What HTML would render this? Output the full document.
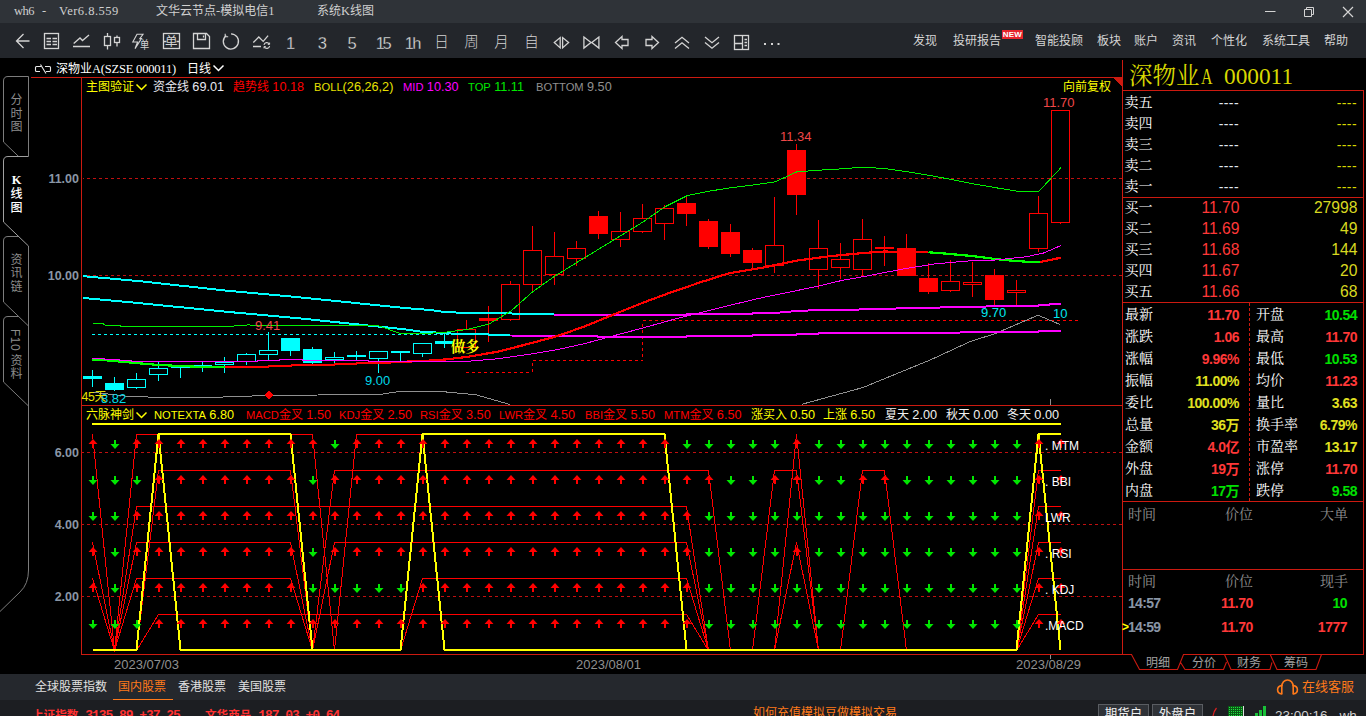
<!DOCTYPE html><html lang="zh"><head><meta charset="utf-8"><title>wh6</title><style>

html,body{margin:0;padding:0;background:#000;}
body{width:1366px;height:716px;overflow:hidden;position:relative;font-family:"Liberation Sans","Noto Sans CJK SC",sans-serif;}
.t{position:absolute;white-space:nowrap;}
.abs{position:absolute;}
svg{position:absolute;left:0;top:0;}

</style></head><body>
<div class="abs" style="left:0;top:0;width:1366px;height:23px;background:#2f3338"></div>
<div class="abs" style="left:0;top:23px;width:1366px;height:35px;background:#23262b"></div>
<div class="abs" style="left:0;top:674px;width:1366px;height:26px;background:#25282d"></div>
<div class="abs" style="left:0;top:700px;width:1366px;height:16px;background:#1c1e22"></div>
<svg width="1366" height="716" viewBox="0 0 1366 716">
<g shape-rendering="crispEdges">
<line x1="31" y1="77.5" x2="1122" y2="77.5" stroke="#cc1a10" stroke-width="1" />
<line x1="81.5" y1="77" x2="81.5" y2="655" stroke="#cc1a10" stroke-width="1" />
<line x1="82" y1="405.5" x2="1122" y2="405.5" stroke="#cc1a10" stroke-width="1" />
<line x1="81" y1="654.5" x2="1122" y2="654.5" stroke="#cc1a10" stroke-width="1" />
<line x1="1122.5" y1="60" x2="1122.5" y2="655" stroke="#cc1a10" stroke-width="1" />
<polygon points="1113,78 1122,78 1122,87" fill="#cc1a10"/>
<line x1="81" y1="452.5" x2="1122" y2="452.5" stroke="#c01010" stroke-width="1" stroke-dasharray="3 3"/>
<line x1="81" y1="524.5" x2="1122" y2="524.5" stroke="#c01010" stroke-width="1" stroke-dasharray="3 3"/>
<line x1="81" y1="596.5" x2="1122" y2="596.5" stroke="#c01010" stroke-width="1" stroke-dasharray="3 3"/>
<line x1="1050.5" y1="399" x2="1050.5" y2="405" stroke="#909090" stroke-width="1" />
<line x1="1050.5" y1="655" x2="1050.5" y2="659" stroke="#909090" stroke-width="1" />
</g>
<clipPath id="cm"><rect x="83" y="78" width="1039" height="327"/></clipPath>
<g clip-path="url(#cm)" shape-rendering="crispEdges">
<line x1="92" y1="334.5" x2="454" y2="334.5" stroke="#00ffff" stroke-width="1" stroke-dasharray="3 3"/>
<polyline points="466,372 532,372 532,360.5 642.5,360.5 642.5,320.5 1080,320.5" fill="none" stroke="#ff0000" stroke-width="1" stroke-dasharray="3 3"/>
<line x1="81" y1="178.5" x2="1122" y2="178.5" stroke="#c01010" stroke-width="1" stroke-dasharray="3 3"/>
<line x1="81" y1="275.5" x2="1122" y2="275.5" stroke="#c01010" stroke-width="1" stroke-dasharray="3 3"/>
<line x1="92.5" y1="370" x2="92.5" y2="387" stroke="#00ffff" stroke-width="1" />
<rect x="83" y="375.5" width="19" height="3.0" fill="#00ffff"/>
<line x1="114.5" y1="377" x2="114.5" y2="391" stroke="#00ffff" stroke-width="1" />
<rect x="105" y="383" width="19" height="7" fill="#00ffff"/>
<line x1="136.5" y1="373" x2="136.5" y2="379.5" stroke="#00ffff" stroke-width="1" />
<line x1="136.5" y1="387.5" x2="136.5" y2="389" stroke="#00ffff" stroke-width="1" />
<rect x="127.5" y="379.5" width="18" height="8.0" fill="none" stroke="#00ffff" stroke-width="1"/>
<line x1="158.5" y1="362" x2="158.5" y2="368" stroke="#00ffff" stroke-width="1" />
<line x1="158.5" y1="374.5" x2="158.5" y2="381" stroke="#00ffff" stroke-width="1" />
<rect x="149.5" y="368" width="18" height="6.5" fill="none" stroke="#00ffff" stroke-width="1"/>
<line x1="180.5" y1="364.5" x2="180.5" y2="378" stroke="#00ffff" stroke-width="1" />
<rect x="171" y="367" width="19" height="1" fill="#00ffff"/>
<line x1="202.5" y1="362" x2="202.5" y2="372" stroke="#00ffff" stroke-width="1" />
<rect x="193" y="365" width="19" height="1" fill="#00ffff"/>
<line x1="224.5" y1="357" x2="224.5" y2="362.5" stroke="#00ffff" stroke-width="1" />
<line x1="224.5" y1="364.5" x2="224.5" y2="373" stroke="#00ffff" stroke-width="1" />
<rect x="215.5" y="362.5" width="18" height="2.0" fill="none" stroke="#00ffff" stroke-width="1"/>
<line x1="246.5" y1="353" x2="246.5" y2="354.5" stroke="#00ffff" stroke-width="1" />
<line x1="246.5" y1="361" x2="246.5" y2="365" stroke="#00ffff" stroke-width="1" />
<rect x="237.5" y="354.5" width="18" height="6.5" fill="none" stroke="#00ffff" stroke-width="1"/>
<line x1="268.5" y1="332" x2="268.5" y2="350.5" stroke="#00ffff" stroke-width="1" />
<line x1="268.5" y1="354.5" x2="268.5" y2="360" stroke="#00ffff" stroke-width="1" />
<rect x="259.5" y="350.5" width="18" height="4.0" fill="none" stroke="#00ffff" stroke-width="1"/>
<line x1="290.5" y1="338" x2="290.5" y2="356" stroke="#00ffff" stroke-width="1" />
<rect x="281" y="338" width="19" height="13" fill="#00ffff"/>
<line x1="312.5" y1="347" x2="312.5" y2="364" stroke="#00ffff" stroke-width="1" />
<rect x="303" y="349" width="19" height="14" fill="#00ffff"/>
<line x1="334.5" y1="352" x2="334.5" y2="357.5" stroke="#00ffff" stroke-width="1" />
<line x1="334.5" y1="359.5" x2="334.5" y2="363" stroke="#00ffff" stroke-width="1" />
<rect x="325.5" y="357.5" width="18" height="2.0" fill="none" stroke="#00ffff" stroke-width="1"/>
<line x1="356.5" y1="350.5" x2="356.5" y2="360" stroke="#00ffff" stroke-width="1" />
<rect x="347" y="355" width="19" height="2" fill="#00ffff"/>
<line x1="378.5" y1="358" x2="378.5" y2="373" stroke="#00ffff" stroke-width="1" />
<rect x="369.5" y="351.5" width="18" height="6.5" fill="none" stroke="#00ffff" stroke-width="1"/>
<line x1="400.5" y1="350.5" x2="400.5" y2="361" stroke="#00ffff" stroke-width="1" />
<rect x="391" y="351" width="19" height="2" fill="#00ffff"/>
<line x1="422.5" y1="353.5" x2="422.5" y2="356.5" stroke="#00ffff" stroke-width="1" />
<rect x="413.5" y="343.5" width="18" height="10.0" fill="none" stroke="#00ffff" stroke-width="1"/>
<line x1="444.5" y1="334" x2="444.5" y2="348" stroke="#00ffff" stroke-width="1" />
<rect x="435" y="341" width="19" height="2.5" fill="#00ffff"/>
<line x1="466.5" y1="320" x2="466.5" y2="329.5" stroke="#ff0000" stroke-width="1" />
<rect x="457.5" y="329.5" width="18" height="18.0" fill="none" stroke="#ff0000" stroke-width="1"/>
<line x1="488.5" y1="306" x2="488.5" y2="341.5" stroke="#ff0000" stroke-width="1" />
<rect x="479" y="318" width="19" height="3" fill="#ff0000"/>
<line x1="510.5" y1="281" x2="510.5" y2="284.5" stroke="#ff0000" stroke-width="1" />
<line x1="510.5" y1="319" x2="510.5" y2="320.5" stroke="#ff0000" stroke-width="1" />
<rect x="501.5" y="284.5" width="18" height="34.5" fill="none" stroke="#ff0000" stroke-width="1"/>
<line x1="532.5" y1="226" x2="532.5" y2="250.5" stroke="#ff0000" stroke-width="1" />
<line x1="532.5" y1="284.5" x2="532.5" y2="292" stroke="#ff0000" stroke-width="1" />
<rect x="523.5" y="250.5" width="18" height="34.0" fill="none" stroke="#ff0000" stroke-width="1"/>
<line x1="554.5" y1="232" x2="554.5" y2="256.5" stroke="#ff0000" stroke-width="1" />
<line x1="554.5" y1="274.5" x2="554.5" y2="285" stroke="#ff0000" stroke-width="1" />
<rect x="545.5" y="256.5" width="18" height="18.0" fill="none" stroke="#ff0000" stroke-width="1"/>
<line x1="576.5" y1="241" x2="576.5" y2="248.5" stroke="#ff0000" stroke-width="1" />
<line x1="576.5" y1="258.5" x2="576.5" y2="266" stroke="#ff0000" stroke-width="1" />
<rect x="567.5" y="248.5" width="18" height="10.0" fill="none" stroke="#ff0000" stroke-width="1"/>
<line x1="598.5" y1="211" x2="598.5" y2="239" stroke="#ff0000" stroke-width="1" />
<rect x="589" y="216" width="19" height="18" fill="#ff0000"/>
<line x1="620.5" y1="212" x2="620.5" y2="231.5" stroke="#ff0000" stroke-width="1" />
<line x1="620.5" y1="239.5" x2="620.5" y2="247" stroke="#ff0000" stroke-width="1" />
<rect x="611.5" y="231.5" width="18" height="8.0" fill="none" stroke="#ff0000" stroke-width="1"/>
<line x1="642.5" y1="204" x2="642.5" y2="218.5" stroke="#ff0000" stroke-width="1" />
<line x1="642.5" y1="231.5" x2="642.5" y2="233" stroke="#ff0000" stroke-width="1" />
<rect x="633.5" y="218.5" width="18" height="13.0" fill="none" stroke="#ff0000" stroke-width="1"/>
<line x1="664.5" y1="205" x2="664.5" y2="208.5" stroke="#ff0000" stroke-width="1" />
<line x1="664.5" y1="223.5" x2="664.5" y2="240" stroke="#ff0000" stroke-width="1" />
<rect x="655.5" y="208.5" width="18" height="15.0" fill="none" stroke="#ff0000" stroke-width="1"/>
<line x1="686.5" y1="195" x2="686.5" y2="226" stroke="#ff0000" stroke-width="1" />
<rect x="677" y="203" width="19" height="11" fill="#ff0000"/>
<line x1="708.5" y1="219" x2="708.5" y2="249" stroke="#ff0000" stroke-width="1" />
<rect x="699" y="221" width="19" height="26" fill="#ff0000"/>
<line x1="730.5" y1="224" x2="730.5" y2="257" stroke="#ff0000" stroke-width="1" />
<rect x="721" y="232" width="19" height="22" fill="#ff0000"/>
<line x1="752.5" y1="248" x2="752.5" y2="269" stroke="#ff0000" stroke-width="1" />
<rect x="743" y="250" width="19" height="13" fill="#ff0000"/>
<line x1="774.5" y1="197" x2="774.5" y2="245.5" stroke="#ff0000" stroke-width="1" />
<line x1="774.5" y1="265.5" x2="774.5" y2="273" stroke="#ff0000" stroke-width="1" />
<rect x="765.5" y="245.5" width="18" height="20.0" fill="none" stroke="#ff0000" stroke-width="1"/>
<line x1="796.5" y1="144" x2="796.5" y2="214.5" stroke="#ff0000" stroke-width="1" />
<rect x="787" y="150" width="19" height="44.5" fill="#ff0000"/>
<line x1="818.5" y1="220" x2="818.5" y2="248.5" stroke="#ff0000" stroke-width="1" />
<line x1="818.5" y1="269.5" x2="818.5" y2="289" stroke="#ff0000" stroke-width="1" />
<rect x="809.5" y="248.5" width="18" height="21.0" fill="none" stroke="#ff0000" stroke-width="1"/>
<line x1="840.5" y1="243" x2="840.5" y2="259.5" stroke="#ff0000" stroke-width="1" />
<line x1="840.5" y1="267.5" x2="840.5" y2="279" stroke="#ff0000" stroke-width="1" />
<rect x="831.5" y="259.5" width="18" height="8.0" fill="none" stroke="#ff0000" stroke-width="1"/>
<line x1="862.5" y1="219" x2="862.5" y2="239.5" stroke="#ff0000" stroke-width="1" />
<line x1="862.5" y1="269.5" x2="862.5" y2="276" stroke="#ff0000" stroke-width="1" />
<rect x="853.5" y="239.5" width="18" height="30.0" fill="none" stroke="#ff0000" stroke-width="1"/>
<line x1="884.5" y1="236" x2="884.5" y2="266" stroke="#ff0000" stroke-width="1" />
<rect x="875" y="247" width="19" height="2" fill="#ff0000"/>
<line x1="906.5" y1="234" x2="906.5" y2="276" stroke="#ff0000" stroke-width="1" />
<rect x="897" y="248" width="19" height="28" fill="#ff0000"/>
<line x1="928.5" y1="263" x2="928.5" y2="294" stroke="#ff0000" stroke-width="1" />
<rect x="919" y="278" width="19" height="14" fill="#ff0000"/>
<line x1="950.5" y1="260" x2="950.5" y2="281.5" stroke="#ff0000" stroke-width="1" />
<line x1="950.5" y1="290.5" x2="950.5" y2="292" stroke="#ff0000" stroke-width="1" />
<rect x="941.5" y="281.5" width="18" height="9.0" fill="none" stroke="#ff0000" stroke-width="1"/>
<line x1="972.5" y1="261.5" x2="972.5" y2="282.5" stroke="#ff0000" stroke-width="1" />
<line x1="972.5" y1="284.5" x2="972.5" y2="297" stroke="#ff0000" stroke-width="1" />
<rect x="963.5" y="282.5" width="18" height="2.0" fill="none" stroke="#ff0000" stroke-width="1"/>
<line x1="994.5" y1="269" x2="994.5" y2="305" stroke="#ff0000" stroke-width="1" />
<rect x="985" y="275" width="19" height="25" fill="#ff0000"/>
<line x1="1016.5" y1="279.5" x2="1016.5" y2="290.5" stroke="#ff0000" stroke-width="1" />
<line x1="1016.5" y1="292.5" x2="1016.5" y2="305" stroke="#ff0000" stroke-width="1" />
<rect x="1007.5" y="290.5" width="18" height="2.0" fill="none" stroke="#ff0000" stroke-width="1"/>
<line x1="1038.5" y1="195.5" x2="1038.5" y2="213.5" stroke="#ff0000" stroke-width="1" />
<line x1="1038.5" y1="248.5" x2="1038.5" y2="252" stroke="#ff0000" stroke-width="1" />
<rect x="1029.5" y="213.5" width="18" height="35.0" fill="none" stroke="#ff0000" stroke-width="1"/>
<line x1="1060.5" y1="222.5" x2="1060.5" y2="223.5" stroke="#ff0000" stroke-width="1" />
<rect x="1051.5" y="110.5" width="18" height="112.0" fill="none" stroke="#ff0000" stroke-width="1"/>
</g>
<g clip-path="url(#cm)" shape-rendering="crispEdges">
<polyline points="92,392.3 111,394.3 126,396.1 148,397 156,397.5 215,397.3 258,395.8 269,395.4 380,394.5 400,391.3 438,391.2 476,394.8 510,404.5" fill="none" stroke="#909090" stroke-width="1" />
<polyline points="801.5,404.4 863,387.5 930.6,359.8 970.5,341.4 995,333.7 1038,315.2 1060,324.5" fill="none" stroke="#909090" stroke-width="1" />
<polyline points="81,276 138,281 230,291 296,297 405,308 430,310 445,312 467,313 520,313.6 554,314" fill="none" stroke="#00ffff" stroke-width="2" />
<polyline points="554,315 686,315 687,314 752,314 753,313 774,313 786,312 797,311 820,310 841,310 903,308.3 977,306.7 1010,306 1038,306 1039,305 1049,305 1050,304 1061,304" fill="none" stroke="#ff00ff" stroke-width="2" />
<polyline points="81,297.8 138,303 230,312.1 296,318 405,329.3 421,331.7 445,333 457,334 488,334 489,335 510,335" fill="none" stroke="#00ffff" stroke-width="2" />
<polyline points="510,335.5 560,336 597,336 598,337 686,337 687,336 752,336 753,335 796,335 797,334 818,334 819,333 881,333 977,332.4 1038,332 1039,331 1061,331" fill="none" stroke="#ff00ff" stroke-width="2" />
<polyline points="93,323.5 103,323.5 105,325 119,325 121,326.4 233,326.4 237,325.2 248,325 302,325.5 378,325.5 400,333.5 425,333.5 445,332.2 467,329.5 489,324 511,311 533,291.5 555,276 577,262.4 599,249 621,235.5 643,222 665,206.8 687,195.7 709,191.2 731,187.7 753,185 775,181.9 797,171.8 819,170.2 841,168.9 863,167.1 885,168.6 907,171.7 929,175.3 951,179.4 973,183.8 995,187.6 1017,191.2 1039,191.2 1061,167.6" fill="none" stroke="#00f000" stroke-width="1" />
<polyline points="92,360 103,360 114,361 125,362 136,363 147,364 159,365 181,366 203,367 225,367" fill="none" stroke="#00ff00" stroke-width="2.2" />
<polyline points="225,367 268,367 269,366 291,366 292,365 334,365 335,364 356,364 357,363 390,363 391,362 404,361.7 424,361 445,359.5 468,356.8 497,351.8 526,344.5 556,336.5 585,326.3 614,314.3 643.5,302.5 673,291.6 702,281.8 729,273.3 762,267.8 796,260.7 830,256.2 863,253 885,251.5 900,252 928.5,252.3" fill="none" stroke="#ff0000" stroke-width="2.2" />
<polyline points="928.5,252.3 939,253 950,254 961,255 972,256 979.5,257 987.7,258 994.7,259 1004.7,260 1016,261 1030,262 1040,262" fill="none" stroke="#00ff00" stroke-width="2.2" />
<polyline points="1040,262 1061,257.7" fill="none" stroke="#ff0000" stroke-width="2.2" />
<polyline points="92,358.5 104,358.5 105,359.5 119,359.5 120,360.5 131,360.5 132,361.5 244,361.5 257,361.5 258,360.5 279,360.5 280,359.5 302,359.5 303,360.5 368,360.5 369,361.5 404,361.5 455,362 468,361.3 497,358.8 526,354.8 556,349.9 585,343.5 614,335.7 643.5,327.8 673,319.6 702,312.2 731,305 762,297.7 780,294 819,286 841.5,280.5 863,276.7 903,269 934,264 970,260.8 995,260 1026,256.8 1044,252.9 1061,245.5" fill="none" stroke="#ff00ff" stroke-width="1" />
<polygon points="269,390.5 273.5,395 269,399.5 264.5,395" fill="#ff0000"/>
</g>
<g shape-rendering="crispEdges">
<line x1="92" y1="424" x2="1061" y2="424" stroke="#ffff00" stroke-width="2" />
</g><g shape-rendering="crispEdges">
<polyline points="92.5,650.5 114.5,650.5 136.5,650.5 158.5,614.5 180.5,614.5 202.5,614.5 224.5,614.5 246.5,614.5 268.5,614.5 290.5,614.5 312.5,614.5 334.5,614.5 356.5,614.5 378.5,614.5 400.5,614.5 422.5,614.5 444.5,614.5 466.5,614.5 488.5,614.5 510.5,614.5 532.5,614.5 554.5,614.5 576.5,614.5 598.5,614.5 620.5,614.5 642.5,614.5 664.5,614.5 686.5,614.5 708.5,650.5 730.5,650.5 752.5,650.5 774.5,650.5 796.5,650.5 818.5,650.5 840.5,650.5 862.5,650.5 884.5,650.5 906.5,650.5 928.5,650.5 950.5,650.5 972.5,650.5 994.5,650.5 1016.5,650.5 1038.5,614.5 1060.5,614.5" fill="none" stroke="#ff0000" stroke-width="1" />
<polyline points="92.5,578.5 114.5,650.5 136.5,578.5 158.5,578.5 180.5,578.5 202.5,578.5 224.5,578.5 246.5,578.5 268.5,578.5 290.5,578.5 312.5,650.5 334.5,650.5 356.5,650.5 378.5,650.5 400.5,650.5 422.5,578.5 444.5,578.5 466.5,578.5 488.5,578.5 510.5,578.5 532.5,578.5 554.5,578.5 576.5,578.5 598.5,578.5 620.5,578.5 642.5,578.5 664.5,578.5 686.5,578.5 708.5,650.5 730.5,650.5 752.5,650.5 774.5,650.5 796.5,650.5 818.5,650.5 840.5,650.5 862.5,650.5 884.5,650.5 906.5,650.5 928.5,650.5 950.5,650.5 972.5,650.5 994.5,650.5 1016.5,650.5 1038.5,578.5 1060.5,578.5" fill="none" stroke="#ff0000" stroke-width="1" />
<polyline points="92.5,542.5 114.5,650.5 136.5,542.5 158.5,542.5 180.5,542.5 202.5,542.5 224.5,542.5 246.5,542.5 268.5,542.5 290.5,542.5 312.5,650.5 334.5,542.5 356.5,542.5 378.5,542.5 400.5,542.5 422.5,542.5 444.5,542.5 466.5,542.5 488.5,542.5 510.5,542.5 532.5,542.5 554.5,542.5 576.5,542.5 598.5,542.5 620.5,542.5 642.5,542.5 664.5,542.5 686.5,542.5 708.5,650.5 730.5,650.5 752.5,650.5 774.5,650.5 796.5,542.5 818.5,650.5 840.5,650.5 862.5,650.5 884.5,650.5 906.5,650.5 928.5,650.5 950.5,650.5 972.5,650.5 994.5,650.5 1016.5,650.5 1038.5,542.5 1060.5,542.5" fill="none" stroke="#ff0000" stroke-width="1" />
<polyline points="92.5,650.5 114.5,650.5 136.5,506.5 158.5,506.5 180.5,506.5 202.5,506.5 224.5,506.5 246.5,506.5 268.5,506.5 290.5,506.5 312.5,506.5 334.5,506.5 356.5,506.5 378.5,506.5 400.5,506.5 422.5,506.5 444.5,506.5 466.5,506.5 488.5,506.5 510.5,506.5 532.5,506.5 554.5,506.5 576.5,506.5 598.5,506.5 620.5,506.5 642.5,506.5 664.5,506.5 686.5,506.5 708.5,650.5 730.5,650.5 752.5,650.5 774.5,650.5 796.5,650.5 818.5,650.5 840.5,650.5 862.5,650.5 884.5,650.5 906.5,650.5 928.5,650.5 950.5,650.5 972.5,650.5 994.5,650.5 1016.5,650.5 1038.5,506.5 1060.5,506.5" fill="none" stroke="#ff0000" stroke-width="1" />
<polyline points="92.5,650.5 114.5,650.5 136.5,650.5 158.5,470.5 180.5,470.5 202.5,470.5 224.5,470.5 246.5,470.5 268.5,470.5 290.5,470.5 312.5,650.5 334.5,470.5 356.5,470.5 378.5,470.5 400.5,470.5 422.5,470.5 444.5,470.5 466.5,470.5 488.5,470.5 510.5,470.5 532.5,470.5 554.5,470.5 576.5,470.5 598.5,470.5 620.5,470.5 642.5,470.5 664.5,470.5 686.5,470.5 708.5,470.5 730.5,650.5 752.5,650.5 774.5,470.5 796.5,470.5 818.5,650.5 840.5,650.5 862.5,470.5 884.5,470.5 906.5,650.5 928.5,650.5 950.5,650.5 972.5,650.5 994.5,650.5 1016.5,650.5 1038.5,470.5 1060.5,470.5" fill="none" stroke="#ff0000" stroke-width="1" />
<polyline points="92.5,434.5 114.5,650.5 136.5,434.5 158.5,434.5 180.5,434.5 202.5,434.5 224.5,434.5 246.5,434.5 268.5,434.5 290.5,434.5 312.5,434.5 334.5,650.5 356.5,434.5 378.5,434.5 400.5,434.5 422.5,434.5 444.5,434.5 466.5,434.5 488.5,434.5 510.5,434.5 532.5,434.5 554.5,434.5 576.5,434.5 598.5,434.5 620.5,434.5 642.5,434.5 664.5,434.5 686.5,650.5 708.5,650.5 730.5,650.5 752.5,650.5 774.5,650.5 796.5,434.5 818.5,650.5 840.5,650.5 862.5,650.5 884.5,650.5 906.5,650.5 928.5,650.5 950.5,650.5 972.5,650.5 994.5,650.5 1016.5,650.5 1038.5,434.5 1060.5,434.5" fill="none" stroke="#ff0000" stroke-width="1" />
<polyline points="92.5,650 114.5,650 136.5,650 158.5,434 180.5,650 202.5,650 224.5,650 246.5,650 268.5,650 290.5,650 312.5,650 334.5,650 356.5,650 378.5,650 400.5,650 422.5,434 444.5,650 466.5,650 488.5,650 510.5,650 532.5,650 554.5,650 576.5,650 598.5,650 620.5,650 642.5,650 664.5,650 686.5,650 708.5,650 730.5,650 752.5,650 774.5,650 796.5,650 818.5,650 840.5,650 862.5,650 884.5,650 906.5,650 928.5,650 950.5,650 972.5,650 994.5,650 1016.5,650 1038.5,434 1060.5,650" fill="none" stroke="#ffff00" stroke-width="2" />
<polyline points="92.5,650 114.5,650 136.5,650 158.5,434 180.5,434 202.5,434 224.5,434 246.5,434 268.5,434 290.5,434 312.5,650 334.5,650 356.5,650 378.5,650 400.5,650 422.5,434 444.5,434 466.5,434 488.5,434 510.5,434 532.5,434 554.5,434 576.5,434 598.5,434 620.5,434 642.5,434 664.5,434 686.5,650 708.5,650 730.5,650 752.5,650 774.5,650 796.5,650 818.5,650 840.5,650 862.5,650 884.5,650 906.5,650 928.5,650 950.5,650 972.5,650 994.5,650 1016.5,650 1038.5,434 1060.5,434" fill="none" stroke="#ffff00" stroke-width="2" />
</g><g>
<path d="M93,629.0 l4.5,-5 h-3.5 v-4 h-2 v4 h-3.5z" fill="#00e600"/>
<path d="M115,629.0 l4.5,-5 h-3.5 v-4 h-2 v4 h-3.5z" fill="#00e600"/>
<path d="M137,629.0 l4.5,-5 h-3.5 v-4 h-2 v4 h-3.5z" fill="#00e600"/>
<path d="M159,619.0 l4.5,5 h-3.5 v4 h-2 v-4 h-3.5z" fill="#ff0000"/>
<path d="M181,619.0 l4.5,5 h-3.5 v4 h-2 v-4 h-3.5z" fill="#ff0000"/>
<path d="M203,619.0 l4.5,5 h-3.5 v4 h-2 v-4 h-3.5z" fill="#ff0000"/>
<path d="M225,619.0 l4.5,5 h-3.5 v4 h-2 v-4 h-3.5z" fill="#ff0000"/>
<path d="M247,619.0 l4.5,5 h-3.5 v4 h-2 v-4 h-3.5z" fill="#ff0000"/>
<path d="M269,619.0 l4.5,5 h-3.5 v4 h-2 v-4 h-3.5z" fill="#ff0000"/>
<path d="M291,619.0 l4.5,5 h-3.5 v4 h-2 v-4 h-3.5z" fill="#ff0000"/>
<path d="M313,619.0 l4.5,5 h-3.5 v4 h-2 v-4 h-3.5z" fill="#ff0000"/>
<path d="M335,619.0 l4.5,5 h-3.5 v4 h-2 v-4 h-3.5z" fill="#ff0000"/>
<path d="M357,619.0 l4.5,5 h-3.5 v4 h-2 v-4 h-3.5z" fill="#ff0000"/>
<path d="M379,619.0 l4.5,5 h-3.5 v4 h-2 v-4 h-3.5z" fill="#ff0000"/>
<path d="M401,619.0 l4.5,5 h-3.5 v4 h-2 v-4 h-3.5z" fill="#ff0000"/>
<path d="M423,619.0 l4.5,5 h-3.5 v4 h-2 v-4 h-3.5z" fill="#ff0000"/>
<path d="M445,619.0 l4.5,5 h-3.5 v4 h-2 v-4 h-3.5z" fill="#ff0000"/>
<path d="M467,619.0 l4.5,5 h-3.5 v4 h-2 v-4 h-3.5z" fill="#ff0000"/>
<path d="M489,619.0 l4.5,5 h-3.5 v4 h-2 v-4 h-3.5z" fill="#ff0000"/>
<path d="M511,619.0 l4.5,5 h-3.5 v4 h-2 v-4 h-3.5z" fill="#ff0000"/>
<path d="M533,619.0 l4.5,5 h-3.5 v4 h-2 v-4 h-3.5z" fill="#ff0000"/>
<path d="M555,619.0 l4.5,5 h-3.5 v4 h-2 v-4 h-3.5z" fill="#ff0000"/>
<path d="M577,619.0 l4.5,5 h-3.5 v4 h-2 v-4 h-3.5z" fill="#ff0000"/>
<path d="M599,619.0 l4.5,5 h-3.5 v4 h-2 v-4 h-3.5z" fill="#ff0000"/>
<path d="M621,619.0 l4.5,5 h-3.5 v4 h-2 v-4 h-3.5z" fill="#ff0000"/>
<path d="M643,619.0 l4.5,5 h-3.5 v4 h-2 v-4 h-3.5z" fill="#ff0000"/>
<path d="M665,619.0 l4.5,5 h-3.5 v4 h-2 v-4 h-3.5z" fill="#ff0000"/>
<path d="M687,619.0 l4.5,5 h-3.5 v4 h-2 v-4 h-3.5z" fill="#ff0000"/>
<path d="M709,629.0 l4.5,-5 h-3.5 v-4 h-2 v4 h-3.5z" fill="#00e600"/>
<path d="M731,629.0 l4.5,-5 h-3.5 v-4 h-2 v4 h-3.5z" fill="#00e600"/>
<path d="M753,629.0 l4.5,-5 h-3.5 v-4 h-2 v4 h-3.5z" fill="#00e600"/>
<path d="M775,629.0 l4.5,-5 h-3.5 v-4 h-2 v4 h-3.5z" fill="#00e600"/>
<path d="M797,629.0 l4.5,-5 h-3.5 v-4 h-2 v4 h-3.5z" fill="#00e600"/>
<path d="M819,629.0 l4.5,-5 h-3.5 v-4 h-2 v4 h-3.5z" fill="#00e600"/>
<path d="M841,629.0 l4.5,-5 h-3.5 v-4 h-2 v4 h-3.5z" fill="#00e600"/>
<path d="M863,629.0 l4.5,-5 h-3.5 v-4 h-2 v4 h-3.5z" fill="#00e600"/>
<path d="M885,629.0 l4.5,-5 h-3.5 v-4 h-2 v4 h-3.5z" fill="#00e600"/>
<path d="M907,629.0 l4.5,-5 h-3.5 v-4 h-2 v4 h-3.5z" fill="#00e600"/>
<path d="M929,629.0 l4.5,-5 h-3.5 v-4 h-2 v4 h-3.5z" fill="#00e600"/>
<path d="M951,629.0 l4.5,-5 h-3.5 v-4 h-2 v4 h-3.5z" fill="#00e600"/>
<path d="M973,629.0 l4.5,-5 h-3.5 v-4 h-2 v4 h-3.5z" fill="#00e600"/>
<path d="M995,629.0 l4.5,-5 h-3.5 v-4 h-2 v4 h-3.5z" fill="#00e600"/>
<path d="M1017,629.0 l4.5,-5 h-3.5 v-4 h-2 v4 h-3.5z" fill="#00e600"/>
<path d="M1039,619.0 l4.5,5 h-3.5 v4 h-2 v-4 h-3.5z" fill="#ff0000"/>
<path d="M1061,619.0 l4.5,5 h-3.5 v4 h-2 v-4 h-3.5z" fill="#ff0000"/>
<path d="M93,583.0 l4.5,5 h-3.5 v4 h-2 v-4 h-3.5z" fill="#ff0000"/>
<path d="M115,593.0 l4.5,-5 h-3.5 v-4 h-2 v4 h-3.5z" fill="#00e600"/>
<path d="M137,583.0 l4.5,5 h-3.5 v4 h-2 v-4 h-3.5z" fill="#ff0000"/>
<path d="M159,583.0 l4.5,5 h-3.5 v4 h-2 v-4 h-3.5z" fill="#ff0000"/>
<path d="M181,583.0 l4.5,5 h-3.5 v4 h-2 v-4 h-3.5z" fill="#ff0000"/>
<path d="M203,583.0 l4.5,5 h-3.5 v4 h-2 v-4 h-3.5z" fill="#ff0000"/>
<path d="M225,583.0 l4.5,5 h-3.5 v4 h-2 v-4 h-3.5z" fill="#ff0000"/>
<path d="M247,583.0 l4.5,5 h-3.5 v4 h-2 v-4 h-3.5z" fill="#ff0000"/>
<path d="M269,583.0 l4.5,5 h-3.5 v4 h-2 v-4 h-3.5z" fill="#ff0000"/>
<path d="M291,583.0 l4.5,5 h-3.5 v4 h-2 v-4 h-3.5z" fill="#ff0000"/>
<path d="M313,593.0 l4.5,-5 h-3.5 v-4 h-2 v4 h-3.5z" fill="#00e600"/>
<path d="M335,593.0 l4.5,-5 h-3.5 v-4 h-2 v4 h-3.5z" fill="#00e600"/>
<path d="M357,593.0 l4.5,-5 h-3.5 v-4 h-2 v4 h-3.5z" fill="#00e600"/>
<path d="M379,593.0 l4.5,-5 h-3.5 v-4 h-2 v4 h-3.5z" fill="#00e600"/>
<path d="M401,593.0 l4.5,-5 h-3.5 v-4 h-2 v4 h-3.5z" fill="#00e600"/>
<path d="M423,583.0 l4.5,5 h-3.5 v4 h-2 v-4 h-3.5z" fill="#ff0000"/>
<path d="M445,583.0 l4.5,5 h-3.5 v4 h-2 v-4 h-3.5z" fill="#ff0000"/>
<path d="M467,583.0 l4.5,5 h-3.5 v4 h-2 v-4 h-3.5z" fill="#ff0000"/>
<path d="M489,583.0 l4.5,5 h-3.5 v4 h-2 v-4 h-3.5z" fill="#ff0000"/>
<path d="M511,583.0 l4.5,5 h-3.5 v4 h-2 v-4 h-3.5z" fill="#ff0000"/>
<path d="M533,583.0 l4.5,5 h-3.5 v4 h-2 v-4 h-3.5z" fill="#ff0000"/>
<path d="M555,583.0 l4.5,5 h-3.5 v4 h-2 v-4 h-3.5z" fill="#ff0000"/>
<path d="M577,583.0 l4.5,5 h-3.5 v4 h-2 v-4 h-3.5z" fill="#ff0000"/>
<path d="M599,583.0 l4.5,5 h-3.5 v4 h-2 v-4 h-3.5z" fill="#ff0000"/>
<path d="M621,583.0 l4.5,5 h-3.5 v4 h-2 v-4 h-3.5z" fill="#ff0000"/>
<path d="M643,583.0 l4.5,5 h-3.5 v4 h-2 v-4 h-3.5z" fill="#ff0000"/>
<path d="M665,583.0 l4.5,5 h-3.5 v4 h-2 v-4 h-3.5z" fill="#ff0000"/>
<path d="M687,583.0 l4.5,5 h-3.5 v4 h-2 v-4 h-3.5z" fill="#ff0000"/>
<path d="M709,593.0 l4.5,-5 h-3.5 v-4 h-2 v4 h-3.5z" fill="#00e600"/>
<path d="M731,593.0 l4.5,-5 h-3.5 v-4 h-2 v4 h-3.5z" fill="#00e600"/>
<path d="M753,593.0 l4.5,-5 h-3.5 v-4 h-2 v4 h-3.5z" fill="#00e600"/>
<path d="M775,593.0 l4.5,-5 h-3.5 v-4 h-2 v4 h-3.5z" fill="#00e600"/>
<path d="M797,593.0 l4.5,-5 h-3.5 v-4 h-2 v4 h-3.5z" fill="#00e600"/>
<path d="M819,593.0 l4.5,-5 h-3.5 v-4 h-2 v4 h-3.5z" fill="#00e600"/>
<path d="M841,593.0 l4.5,-5 h-3.5 v-4 h-2 v4 h-3.5z" fill="#00e600"/>
<path d="M863,593.0 l4.5,-5 h-3.5 v-4 h-2 v4 h-3.5z" fill="#00e600"/>
<path d="M885,593.0 l4.5,-5 h-3.5 v-4 h-2 v4 h-3.5z" fill="#00e600"/>
<path d="M907,593.0 l4.5,-5 h-3.5 v-4 h-2 v4 h-3.5z" fill="#00e600"/>
<path d="M929,593.0 l4.5,-5 h-3.5 v-4 h-2 v4 h-3.5z" fill="#00e600"/>
<path d="M951,593.0 l4.5,-5 h-3.5 v-4 h-2 v4 h-3.5z" fill="#00e600"/>
<path d="M973,593.0 l4.5,-5 h-3.5 v-4 h-2 v4 h-3.5z" fill="#00e600"/>
<path d="M995,593.0 l4.5,-5 h-3.5 v-4 h-2 v4 h-3.5z" fill="#00e600"/>
<path d="M1017,593.0 l4.5,-5 h-3.5 v-4 h-2 v4 h-3.5z" fill="#00e600"/>
<path d="M1039,583.0 l4.5,5 h-3.5 v4 h-2 v-4 h-3.5z" fill="#ff0000"/>
<path d="M1061,583.0 l4.5,5 h-3.5 v4 h-2 v-4 h-3.5z" fill="#ff0000"/>
<path d="M93,547.0 l4.5,5 h-3.5 v4 h-2 v-4 h-3.5z" fill="#ff0000"/>
<path d="M115,557.0 l4.5,-5 h-3.5 v-4 h-2 v4 h-3.5z" fill="#00e600"/>
<path d="M137,547.0 l4.5,5 h-3.5 v4 h-2 v-4 h-3.5z" fill="#ff0000"/>
<path d="M159,547.0 l4.5,5 h-3.5 v4 h-2 v-4 h-3.5z" fill="#ff0000"/>
<path d="M181,547.0 l4.5,5 h-3.5 v4 h-2 v-4 h-3.5z" fill="#ff0000"/>
<path d="M203,547.0 l4.5,5 h-3.5 v4 h-2 v-4 h-3.5z" fill="#ff0000"/>
<path d="M225,547.0 l4.5,5 h-3.5 v4 h-2 v-4 h-3.5z" fill="#ff0000"/>
<path d="M247,547.0 l4.5,5 h-3.5 v4 h-2 v-4 h-3.5z" fill="#ff0000"/>
<path d="M269,547.0 l4.5,5 h-3.5 v4 h-2 v-4 h-3.5z" fill="#ff0000"/>
<path d="M291,547.0 l4.5,5 h-3.5 v4 h-2 v-4 h-3.5z" fill="#ff0000"/>
<path d="M313,557.0 l4.5,-5 h-3.5 v-4 h-2 v4 h-3.5z" fill="#00e600"/>
<path d="M335,547.0 l4.5,5 h-3.5 v4 h-2 v-4 h-3.5z" fill="#ff0000"/>
<path d="M357,547.0 l4.5,5 h-3.5 v4 h-2 v-4 h-3.5z" fill="#ff0000"/>
<path d="M379,547.0 l4.5,5 h-3.5 v4 h-2 v-4 h-3.5z" fill="#ff0000"/>
<path d="M401,547.0 l4.5,5 h-3.5 v4 h-2 v-4 h-3.5z" fill="#ff0000"/>
<path d="M423,547.0 l4.5,5 h-3.5 v4 h-2 v-4 h-3.5z" fill="#ff0000"/>
<path d="M445,547.0 l4.5,5 h-3.5 v4 h-2 v-4 h-3.5z" fill="#ff0000"/>
<path d="M467,547.0 l4.5,5 h-3.5 v4 h-2 v-4 h-3.5z" fill="#ff0000"/>
<path d="M489,547.0 l4.5,5 h-3.5 v4 h-2 v-4 h-3.5z" fill="#ff0000"/>
<path d="M511,547.0 l4.5,5 h-3.5 v4 h-2 v-4 h-3.5z" fill="#ff0000"/>
<path d="M533,547.0 l4.5,5 h-3.5 v4 h-2 v-4 h-3.5z" fill="#ff0000"/>
<path d="M555,547.0 l4.5,5 h-3.5 v4 h-2 v-4 h-3.5z" fill="#ff0000"/>
<path d="M577,547.0 l4.5,5 h-3.5 v4 h-2 v-4 h-3.5z" fill="#ff0000"/>
<path d="M599,547.0 l4.5,5 h-3.5 v4 h-2 v-4 h-3.5z" fill="#ff0000"/>
<path d="M621,547.0 l4.5,5 h-3.5 v4 h-2 v-4 h-3.5z" fill="#ff0000"/>
<path d="M643,547.0 l4.5,5 h-3.5 v4 h-2 v-4 h-3.5z" fill="#ff0000"/>
<path d="M665,547.0 l4.5,5 h-3.5 v4 h-2 v-4 h-3.5z" fill="#ff0000"/>
<path d="M687,547.0 l4.5,5 h-3.5 v4 h-2 v-4 h-3.5z" fill="#ff0000"/>
<path d="M709,557.0 l4.5,-5 h-3.5 v-4 h-2 v4 h-3.5z" fill="#00e600"/>
<path d="M731,557.0 l4.5,-5 h-3.5 v-4 h-2 v4 h-3.5z" fill="#00e600"/>
<path d="M753,557.0 l4.5,-5 h-3.5 v-4 h-2 v4 h-3.5z" fill="#00e600"/>
<path d="M775,557.0 l4.5,-5 h-3.5 v-4 h-2 v4 h-3.5z" fill="#00e600"/>
<path d="M797,547.0 l4.5,5 h-3.5 v4 h-2 v-4 h-3.5z" fill="#ff0000"/>
<path d="M819,557.0 l4.5,-5 h-3.5 v-4 h-2 v4 h-3.5z" fill="#00e600"/>
<path d="M841,557.0 l4.5,-5 h-3.5 v-4 h-2 v4 h-3.5z" fill="#00e600"/>
<path d="M863,557.0 l4.5,-5 h-3.5 v-4 h-2 v4 h-3.5z" fill="#00e600"/>
<path d="M885,557.0 l4.5,-5 h-3.5 v-4 h-2 v4 h-3.5z" fill="#00e600"/>
<path d="M907,557.0 l4.5,-5 h-3.5 v-4 h-2 v4 h-3.5z" fill="#00e600"/>
<path d="M929,557.0 l4.5,-5 h-3.5 v-4 h-2 v4 h-3.5z" fill="#00e600"/>
<path d="M951,557.0 l4.5,-5 h-3.5 v-4 h-2 v4 h-3.5z" fill="#00e600"/>
<path d="M973,557.0 l4.5,-5 h-3.5 v-4 h-2 v4 h-3.5z" fill="#00e600"/>
<path d="M995,557.0 l4.5,-5 h-3.5 v-4 h-2 v4 h-3.5z" fill="#00e600"/>
<path d="M1017,557.0 l4.5,-5 h-3.5 v-4 h-2 v4 h-3.5z" fill="#00e600"/>
<path d="M1039,547.0 l4.5,5 h-3.5 v4 h-2 v-4 h-3.5z" fill="#ff0000"/>
<path d="M1061,547.0 l4.5,5 h-3.5 v4 h-2 v-4 h-3.5z" fill="#ff0000"/>
<path d="M93,521.0 l4.5,-5 h-3.5 v-4 h-2 v4 h-3.5z" fill="#00e600"/>
<path d="M115,521.0 l4.5,-5 h-3.5 v-4 h-2 v4 h-3.5z" fill="#00e600"/>
<path d="M137,511.0 l4.5,5 h-3.5 v4 h-2 v-4 h-3.5z" fill="#ff0000"/>
<path d="M159,511.0 l4.5,5 h-3.5 v4 h-2 v-4 h-3.5z" fill="#ff0000"/>
<path d="M181,511.0 l4.5,5 h-3.5 v4 h-2 v-4 h-3.5z" fill="#ff0000"/>
<path d="M203,511.0 l4.5,5 h-3.5 v4 h-2 v-4 h-3.5z" fill="#ff0000"/>
<path d="M225,511.0 l4.5,5 h-3.5 v4 h-2 v-4 h-3.5z" fill="#ff0000"/>
<path d="M247,511.0 l4.5,5 h-3.5 v4 h-2 v-4 h-3.5z" fill="#ff0000"/>
<path d="M269,511.0 l4.5,5 h-3.5 v4 h-2 v-4 h-3.5z" fill="#ff0000"/>
<path d="M291,511.0 l4.5,5 h-3.5 v4 h-2 v-4 h-3.5z" fill="#ff0000"/>
<path d="M313,511.0 l4.5,5 h-3.5 v4 h-2 v-4 h-3.5z" fill="#ff0000"/>
<path d="M335,511.0 l4.5,5 h-3.5 v4 h-2 v-4 h-3.5z" fill="#ff0000"/>
<path d="M357,511.0 l4.5,5 h-3.5 v4 h-2 v-4 h-3.5z" fill="#ff0000"/>
<path d="M379,511.0 l4.5,5 h-3.5 v4 h-2 v-4 h-3.5z" fill="#ff0000"/>
<path d="M401,511.0 l4.5,5 h-3.5 v4 h-2 v-4 h-3.5z" fill="#ff0000"/>
<path d="M423,511.0 l4.5,5 h-3.5 v4 h-2 v-4 h-3.5z" fill="#ff0000"/>
<path d="M445,511.0 l4.5,5 h-3.5 v4 h-2 v-4 h-3.5z" fill="#ff0000"/>
<path d="M467,511.0 l4.5,5 h-3.5 v4 h-2 v-4 h-3.5z" fill="#ff0000"/>
<path d="M489,511.0 l4.5,5 h-3.5 v4 h-2 v-4 h-3.5z" fill="#ff0000"/>
<path d="M511,511.0 l4.5,5 h-3.5 v4 h-2 v-4 h-3.5z" fill="#ff0000"/>
<path d="M533,511.0 l4.5,5 h-3.5 v4 h-2 v-4 h-3.5z" fill="#ff0000"/>
<path d="M555,511.0 l4.5,5 h-3.5 v4 h-2 v-4 h-3.5z" fill="#ff0000"/>
<path d="M577,511.0 l4.5,5 h-3.5 v4 h-2 v-4 h-3.5z" fill="#ff0000"/>
<path d="M599,511.0 l4.5,5 h-3.5 v4 h-2 v-4 h-3.5z" fill="#ff0000"/>
<path d="M621,511.0 l4.5,5 h-3.5 v4 h-2 v-4 h-3.5z" fill="#ff0000"/>
<path d="M643,511.0 l4.5,5 h-3.5 v4 h-2 v-4 h-3.5z" fill="#ff0000"/>
<path d="M665,511.0 l4.5,5 h-3.5 v4 h-2 v-4 h-3.5z" fill="#ff0000"/>
<path d="M687,511.0 l4.5,5 h-3.5 v4 h-2 v-4 h-3.5z" fill="#ff0000"/>
<path d="M709,521.0 l4.5,-5 h-3.5 v-4 h-2 v4 h-3.5z" fill="#00e600"/>
<path d="M731,521.0 l4.5,-5 h-3.5 v-4 h-2 v4 h-3.5z" fill="#00e600"/>
<path d="M753,521.0 l4.5,-5 h-3.5 v-4 h-2 v4 h-3.5z" fill="#00e600"/>
<path d="M775,521.0 l4.5,-5 h-3.5 v-4 h-2 v4 h-3.5z" fill="#00e600"/>
<path d="M797,521.0 l4.5,-5 h-3.5 v-4 h-2 v4 h-3.5z" fill="#00e600"/>
<path d="M819,521.0 l4.5,-5 h-3.5 v-4 h-2 v4 h-3.5z" fill="#00e600"/>
<path d="M841,521.0 l4.5,-5 h-3.5 v-4 h-2 v4 h-3.5z" fill="#00e600"/>
<path d="M863,521.0 l4.5,-5 h-3.5 v-4 h-2 v4 h-3.5z" fill="#00e600"/>
<path d="M885,521.0 l4.5,-5 h-3.5 v-4 h-2 v4 h-3.5z" fill="#00e600"/>
<path d="M907,521.0 l4.5,-5 h-3.5 v-4 h-2 v4 h-3.5z" fill="#00e600"/>
<path d="M929,521.0 l4.5,-5 h-3.5 v-4 h-2 v4 h-3.5z" fill="#00e600"/>
<path d="M951,521.0 l4.5,-5 h-3.5 v-4 h-2 v4 h-3.5z" fill="#00e600"/>
<path d="M973,521.0 l4.5,-5 h-3.5 v-4 h-2 v4 h-3.5z" fill="#00e600"/>
<path d="M995,521.0 l4.5,-5 h-3.5 v-4 h-2 v4 h-3.5z" fill="#00e600"/>
<path d="M1017,521.0 l4.5,-5 h-3.5 v-4 h-2 v4 h-3.5z" fill="#00e600"/>
<path d="M1039,511.0 l4.5,5 h-3.5 v4 h-2 v-4 h-3.5z" fill="#ff0000"/>
<path d="M1061,511.0 l4.5,5 h-3.5 v4 h-2 v-4 h-3.5z" fill="#ff0000"/>
<path d="M93,485.0 l4.5,-5 h-3.5 v-4 h-2 v4 h-3.5z" fill="#00e600"/>
<path d="M115,485.0 l4.5,-5 h-3.5 v-4 h-2 v4 h-3.5z" fill="#00e600"/>
<path d="M137,485.0 l4.5,-5 h-3.5 v-4 h-2 v4 h-3.5z" fill="#00e600"/>
<path d="M159,475.0 l4.5,5 h-3.5 v4 h-2 v-4 h-3.5z" fill="#ff0000"/>
<path d="M181,475.0 l4.5,5 h-3.5 v4 h-2 v-4 h-3.5z" fill="#ff0000"/>
<path d="M203,475.0 l4.5,5 h-3.5 v4 h-2 v-4 h-3.5z" fill="#ff0000"/>
<path d="M225,475.0 l4.5,5 h-3.5 v4 h-2 v-4 h-3.5z" fill="#ff0000"/>
<path d="M247,475.0 l4.5,5 h-3.5 v4 h-2 v-4 h-3.5z" fill="#ff0000"/>
<path d="M269,475.0 l4.5,5 h-3.5 v4 h-2 v-4 h-3.5z" fill="#ff0000"/>
<path d="M291,475.0 l4.5,5 h-3.5 v4 h-2 v-4 h-3.5z" fill="#ff0000"/>
<path d="M313,485.0 l4.5,-5 h-3.5 v-4 h-2 v4 h-3.5z" fill="#00e600"/>
<path d="M335,475.0 l4.5,5 h-3.5 v4 h-2 v-4 h-3.5z" fill="#ff0000"/>
<path d="M357,475.0 l4.5,5 h-3.5 v4 h-2 v-4 h-3.5z" fill="#ff0000"/>
<path d="M379,475.0 l4.5,5 h-3.5 v4 h-2 v-4 h-3.5z" fill="#ff0000"/>
<path d="M401,475.0 l4.5,5 h-3.5 v4 h-2 v-4 h-3.5z" fill="#ff0000"/>
<path d="M423,475.0 l4.5,5 h-3.5 v4 h-2 v-4 h-3.5z" fill="#ff0000"/>
<path d="M445,475.0 l4.5,5 h-3.5 v4 h-2 v-4 h-3.5z" fill="#ff0000"/>
<path d="M467,475.0 l4.5,5 h-3.5 v4 h-2 v-4 h-3.5z" fill="#ff0000"/>
<path d="M489,475.0 l4.5,5 h-3.5 v4 h-2 v-4 h-3.5z" fill="#ff0000"/>
<path d="M511,475.0 l4.5,5 h-3.5 v4 h-2 v-4 h-3.5z" fill="#ff0000"/>
<path d="M533,475.0 l4.5,5 h-3.5 v4 h-2 v-4 h-3.5z" fill="#ff0000"/>
<path d="M555,475.0 l4.5,5 h-3.5 v4 h-2 v-4 h-3.5z" fill="#ff0000"/>
<path d="M577,475.0 l4.5,5 h-3.5 v4 h-2 v-4 h-3.5z" fill="#ff0000"/>
<path d="M599,475.0 l4.5,5 h-3.5 v4 h-2 v-4 h-3.5z" fill="#ff0000"/>
<path d="M621,475.0 l4.5,5 h-3.5 v4 h-2 v-4 h-3.5z" fill="#ff0000"/>
<path d="M643,475.0 l4.5,5 h-3.5 v4 h-2 v-4 h-3.5z" fill="#ff0000"/>
<path d="M665,475.0 l4.5,5 h-3.5 v4 h-2 v-4 h-3.5z" fill="#ff0000"/>
<path d="M687,475.0 l4.5,5 h-3.5 v4 h-2 v-4 h-3.5z" fill="#ff0000"/>
<path d="M709,475.0 l4.5,5 h-3.5 v4 h-2 v-4 h-3.5z" fill="#ff0000"/>
<path d="M731,485.0 l4.5,-5 h-3.5 v-4 h-2 v4 h-3.5z" fill="#00e600"/>
<path d="M753,485.0 l4.5,-5 h-3.5 v-4 h-2 v4 h-3.5z" fill="#00e600"/>
<path d="M775,475.0 l4.5,5 h-3.5 v4 h-2 v-4 h-3.5z" fill="#ff0000"/>
<path d="M797,475.0 l4.5,5 h-3.5 v4 h-2 v-4 h-3.5z" fill="#ff0000"/>
<path d="M819,485.0 l4.5,-5 h-3.5 v-4 h-2 v4 h-3.5z" fill="#00e600"/>
<path d="M841,485.0 l4.5,-5 h-3.5 v-4 h-2 v4 h-3.5z" fill="#00e600"/>
<path d="M863,475.0 l4.5,5 h-3.5 v4 h-2 v-4 h-3.5z" fill="#ff0000"/>
<path d="M885,475.0 l4.5,5 h-3.5 v4 h-2 v-4 h-3.5z" fill="#ff0000"/>
<path d="M907,485.0 l4.5,-5 h-3.5 v-4 h-2 v4 h-3.5z" fill="#00e600"/>
<path d="M929,485.0 l4.5,-5 h-3.5 v-4 h-2 v4 h-3.5z" fill="#00e600"/>
<path d="M951,485.0 l4.5,-5 h-3.5 v-4 h-2 v4 h-3.5z" fill="#00e600"/>
<path d="M973,485.0 l4.5,-5 h-3.5 v-4 h-2 v4 h-3.5z" fill="#00e600"/>
<path d="M995,485.0 l4.5,-5 h-3.5 v-4 h-2 v4 h-3.5z" fill="#00e600"/>
<path d="M1017,485.0 l4.5,-5 h-3.5 v-4 h-2 v4 h-3.5z" fill="#00e600"/>
<path d="M1039,475.0 l4.5,5 h-3.5 v4 h-2 v-4 h-3.5z" fill="#ff0000"/>
<path d="M1061,475.0 l4.5,5 h-3.5 v4 h-2 v-4 h-3.5z" fill="#ff0000"/>
<path d="M93,439.0 l4.5,5 h-3.5 v4 h-2 v-4 h-3.5z" fill="#ff0000"/>
<path d="M115,449.0 l4.5,-5 h-3.5 v-4 h-2 v4 h-3.5z" fill="#00e600"/>
<path d="M137,439.0 l4.5,5 h-3.5 v4 h-2 v-4 h-3.5z" fill="#ff0000"/>
<path d="M159,439.0 l4.5,5 h-3.5 v4 h-2 v-4 h-3.5z" fill="#ff0000"/>
<path d="M181,439.0 l4.5,5 h-3.5 v4 h-2 v-4 h-3.5z" fill="#ff0000"/>
<path d="M203,439.0 l4.5,5 h-3.5 v4 h-2 v-4 h-3.5z" fill="#ff0000"/>
<path d="M225,439.0 l4.5,5 h-3.5 v4 h-2 v-4 h-3.5z" fill="#ff0000"/>
<path d="M247,439.0 l4.5,5 h-3.5 v4 h-2 v-4 h-3.5z" fill="#ff0000"/>
<path d="M269,439.0 l4.5,5 h-3.5 v4 h-2 v-4 h-3.5z" fill="#ff0000"/>
<path d="M291,439.0 l4.5,5 h-3.5 v4 h-2 v-4 h-3.5z" fill="#ff0000"/>
<path d="M313,439.0 l4.5,5 h-3.5 v4 h-2 v-4 h-3.5z" fill="#ff0000"/>
<path d="M335,449.0 l4.5,-5 h-3.5 v-4 h-2 v4 h-3.5z" fill="#00e600"/>
<path d="M357,439.0 l4.5,5 h-3.5 v4 h-2 v-4 h-3.5z" fill="#ff0000"/>
<path d="M379,439.0 l4.5,5 h-3.5 v4 h-2 v-4 h-3.5z" fill="#ff0000"/>
<path d="M401,439.0 l4.5,5 h-3.5 v4 h-2 v-4 h-3.5z" fill="#ff0000"/>
<path d="M423,439.0 l4.5,5 h-3.5 v4 h-2 v-4 h-3.5z" fill="#ff0000"/>
<path d="M445,439.0 l4.5,5 h-3.5 v4 h-2 v-4 h-3.5z" fill="#ff0000"/>
<path d="M467,439.0 l4.5,5 h-3.5 v4 h-2 v-4 h-3.5z" fill="#ff0000"/>
<path d="M489,439.0 l4.5,5 h-3.5 v4 h-2 v-4 h-3.5z" fill="#ff0000"/>
<path d="M511,439.0 l4.5,5 h-3.5 v4 h-2 v-4 h-3.5z" fill="#ff0000"/>
<path d="M533,439.0 l4.5,5 h-3.5 v4 h-2 v-4 h-3.5z" fill="#ff0000"/>
<path d="M555,439.0 l4.5,5 h-3.5 v4 h-2 v-4 h-3.5z" fill="#ff0000"/>
<path d="M577,439.0 l4.5,5 h-3.5 v4 h-2 v-4 h-3.5z" fill="#ff0000"/>
<path d="M599,439.0 l4.5,5 h-3.5 v4 h-2 v-4 h-3.5z" fill="#ff0000"/>
<path d="M621,439.0 l4.5,5 h-3.5 v4 h-2 v-4 h-3.5z" fill="#ff0000"/>
<path d="M643,439.0 l4.5,5 h-3.5 v4 h-2 v-4 h-3.5z" fill="#ff0000"/>
<path d="M665,439.0 l4.5,5 h-3.5 v4 h-2 v-4 h-3.5z" fill="#ff0000"/>
<path d="M687,449.0 l4.5,-5 h-3.5 v-4 h-2 v4 h-3.5z" fill="#00e600"/>
<path d="M709,449.0 l4.5,-5 h-3.5 v-4 h-2 v4 h-3.5z" fill="#00e600"/>
<path d="M731,449.0 l4.5,-5 h-3.5 v-4 h-2 v4 h-3.5z" fill="#00e600"/>
<path d="M753,449.0 l4.5,-5 h-3.5 v-4 h-2 v4 h-3.5z" fill="#00e600"/>
<path d="M775,449.0 l4.5,-5 h-3.5 v-4 h-2 v4 h-3.5z" fill="#00e600"/>
<path d="M797,439.0 l4.5,5 h-3.5 v4 h-2 v-4 h-3.5z" fill="#ff0000"/>
<path d="M819,449.0 l4.5,-5 h-3.5 v-4 h-2 v4 h-3.5z" fill="#00e600"/>
<path d="M841,449.0 l4.5,-5 h-3.5 v-4 h-2 v4 h-3.5z" fill="#00e600"/>
<path d="M863,449.0 l4.5,-5 h-3.5 v-4 h-2 v4 h-3.5z" fill="#00e600"/>
<path d="M885,449.0 l4.5,-5 h-3.5 v-4 h-2 v4 h-3.5z" fill="#00e600"/>
<path d="M907,449.0 l4.5,-5 h-3.5 v-4 h-2 v4 h-3.5z" fill="#00e600"/>
<path d="M929,449.0 l4.5,-5 h-3.5 v-4 h-2 v4 h-3.5z" fill="#00e600"/>
<path d="M951,449.0 l4.5,-5 h-3.5 v-4 h-2 v4 h-3.5z" fill="#00e600"/>
<path d="M973,449.0 l4.5,-5 h-3.5 v-4 h-2 v4 h-3.5z" fill="#00e600"/>
<path d="M995,449.0 l4.5,-5 h-3.5 v-4 h-2 v4 h-3.5z" fill="#00e600"/>
<path d="M1017,449.0 l4.5,-5 h-3.5 v-4 h-2 v4 h-3.5z" fill="#00e600"/>
<path d="M1039,439.0 l4.5,5 h-3.5 v4 h-2 v-4 h-3.5z" fill="#ff0000"/>
<path d="M1061,439.0 l4.5,5 h-3.5 v4 h-2 v-4 h-3.5z" fill="#ff0000"/>
</g>
</svg>
<div class="t" style="left:14px;top:3px;font:normal 12px/16px 'Liberation Sans','Noto Sans CJK SC',sans-serif;color:#d0d0d0;"><span style="font:12.5px/16px 'Liberation Serif',serif;letter-spacing:-0.5px">wh6</span></div>
<div class="t" style="left:42px;top:3px;font:normal 12px/16px 'Liberation Sans','Noto Sans CJK SC',sans-serif;color:#d0d0d0;"><span style="font:12.5px/16px 'Liberation Serif',serif;letter-spacing:0px">-</span></div>
<div class="t" style="left:59px;top:3px;font:normal 12px/16px 'Liberation Sans','Noto Sans CJK SC',sans-serif;color:#d0d0d0;"><span style="font:12.5px/16px 'Liberation Serif',serif;letter-spacing:0.5px">Ver6.8.559</span></div>
<div class="t" style="left:156px;top:3px;font:normal 12px/16px 'Liberation Sans','Noto Sans CJK SC',sans-serif;color:#d0d0d0;">文华云节点<span style="font:12.5px/16px 'Liberation Serif',serif;letter-spacing:0px">-</span>模拟电信<span style="font:12.5px/16px 'Liberation Serif',serif;letter-spacing:0px">1</span></div>
<div class="t" style="left:317px;top:3px;font:normal 12px/16px 'Liberation Sans','Noto Sans CJK SC',sans-serif;color:#d0d0d0;">系统<span style="font:12.5px/16px 'Liberation Serif',serif;letter-spacing:0px">K</span>线图</div>
<div class="t" style="left:913px;top:33px;font:normal 12px/16px 'Liberation Sans','Noto Sans CJK SC',sans-serif;color:#d4d4d4;">发现</div>
<div class="t" style="left:953px;top:33px;font:normal 12px/16px 'Liberation Sans','Noto Sans CJK SC',sans-serif;color:#d4d4d4;">投研报告</div>
<div class="t" style="left:1035px;top:33px;font:normal 12px/16px 'Liberation Sans','Noto Sans CJK SC',sans-serif;color:#d4d4d4;">智能投顾</div>
<div class="t" style="left:1097px;top:33px;font:normal 12px/16px 'Liberation Sans','Noto Sans CJK SC',sans-serif;color:#d4d4d4;">板块</div>
<div class="t" style="left:1134px;top:33px;font:normal 12px/16px 'Liberation Sans','Noto Sans CJK SC',sans-serif;color:#d4d4d4;">账户</div>
<div class="t" style="left:1172px;top:33px;font:normal 12px/16px 'Liberation Sans','Noto Sans CJK SC',sans-serif;color:#d4d4d4;">资讯</div>
<div class="t" style="left:1211px;top:33px;font:normal 12px/16px 'Liberation Sans','Noto Sans CJK SC',sans-serif;color:#d4d4d4;">个性化</div>
<div class="t" style="left:1262px;top:33px;font:normal 12px/16px 'Liberation Sans','Noto Sans CJK SC',sans-serif;color:#d4d4d4;">系统工具</div>
<div class="t" style="left:1324px;top:33px;font:normal 12px/16px 'Liberation Sans','Noto Sans CJK SC',sans-serif;color:#d4d4d4;">帮助</div>
<div class="t" style="left:1002px;top:30px;width:21px;height:9px;background:#e8252c;color:#fff;font:bold 8px/9px 'Liberation Sans',sans-serif;text-align:center;letter-spacing:0.2px">NEW</div>
<div class="t" style="left:270.5px;top:33px;width:40px;text-align:center;font:16.5px/20px 'Liberation Sans','Noto Sans CJK SC',sans-serif;color:#e2e2e2;letter-spacing:0px;-webkit-text-stroke:0.3px #23262b;padding-left:0px;box-sizing:border-box">1</div>
<div class="t" style="left:302.3px;top:33px;width:40px;text-align:center;font:16.5px/20px 'Liberation Sans','Noto Sans CJK SC',sans-serif;color:#e2e2e2;letter-spacing:0px;-webkit-text-stroke:0.3px #23262b;padding-left:0px;box-sizing:border-box">3</div>
<div class="t" style="left:332.2px;top:33px;width:40px;text-align:center;font:16.5px/20px 'Liberation Sans','Noto Sans CJK SC',sans-serif;color:#e2e2e2;letter-spacing:0px;-webkit-text-stroke:0.3px #23262b;padding-left:0px;box-sizing:border-box">5</div>
<div class="t" style="left:361.3px;top:33px;width:40px;text-align:center;font:16.5px/20px 'Liberation Sans','Noto Sans CJK SC',sans-serif;color:#e2e2e2;letter-spacing:-2.4px;-webkit-text-stroke:0.3px #23262b;padding-left:2.4px;box-sizing:border-box">15</div>
<div class="t" style="left:391.3px;top:33px;width:40px;text-align:center;font:16.5px/20px 'Liberation Sans','Noto Sans CJK SC',sans-serif;color:#e2e2e2;letter-spacing:-1.8px;-webkit-text-stroke:0.3px #23262b;padding-left:1.8px;box-sizing:border-box">1h</div>
<div class="t" style="left:426.5px;top:32px;width:30px;text-align:center;font:300 14.5px/20px 'Liberation Sans','Noto Sans CJK SC',sans-serif;color:#d4d4d4">日</div>
<div class="t" style="left:456.5px;top:32px;width:30px;text-align:center;font:300 14.5px/20px 'Liberation Sans','Noto Sans CJK SC',sans-serif;color:#d4d4d4">周</div>
<div class="t" style="left:486.5px;top:32px;width:30px;text-align:center;font:300 14.5px/20px 'Liberation Sans','Noto Sans CJK SC',sans-serif;color:#d4d4d4">月</div>
<div class="t" style="left:516.5px;top:32px;width:30px;text-align:center;font:300 14.5px/20px 'Liberation Sans','Noto Sans CJK SC',sans-serif;color:#d4d4d4">自</div>
<div class="t" style="left:56px;top:61px;font:normal 12px/16px 'Liberation Sans','Noto Sans CJK SC',sans-serif;color:#fff;">深物业<span style="font:12.5px/16px 'Liberation Serif',serif;letter-spacing:-0.2px">A(SZSE&nbsp;000011)</span></div>
<div class="t" style="left:187px;top:61px;font:normal 12px/16px 'Liberation Sans','Noto Sans CJK SC',sans-serif;color:#fff;">日线</div>
<div class="t" style="left:86px;top:79px;font:normal 12px/16px 'Liberation Sans','Noto Sans CJK SC',sans-serif;color:#ffff00;">主图验证</div>
<div class="t" style="left:153px;top:79px;font:normal 12px/16px 'Liberation Sans','Noto Sans CJK SC',sans-serif;color:#e8e8f0;">资金线 <span style="font-size:12.7px">69.01</span></div>
<div class="t" style="left:233px;top:79px;font:normal 12px/16px 'Liberation Sans','Noto Sans CJK SC',sans-serif;color:#ff0000;">趋势线 <span style="font-size:12.7px">10.18</span></div>
<div class="t" style="left:314px;top:79px;font:normal 12px/16px 'Liberation Sans','Noto Sans CJK SC',sans-serif;color:#e8e000;"><span style="font-size:11.2px">BOLL</span><span style="font-size:12.7px">(26,26,2)</span></div>
<div class="t" style="left:403px;top:79px;font:normal 12px/16px 'Liberation Sans','Noto Sans CJK SC',sans-serif;color:#ff00ff;"><span style="font-size:11.2px">MID</span> <span style="font-size:12.7px">10.30</span></div>
<div class="t" style="left:468px;top:79px;font:normal 12px/16px 'Liberation Sans','Noto Sans CJK SC',sans-serif;color:#00e800;"><span style="font-size:11.2px">TOP</span> <span style="font-size:12.7px">11.11</span></div>
<div class="t" style="left:536px;top:79px;font:normal 12px/16px 'Liberation Sans','Noto Sans CJK SC',sans-serif;color:#909090;"><span style="font-size:11.2px">BOTTOM</span> <span style="font-size:12.7px">9.50</span></div>
<div class="t" style="left:1063px;top:79px;font:normal 12px/16px 'Liberation Sans','Noto Sans CJK SC',sans-serif;color:#ffff00;">向前复权</div>
<div class="t" style="left:86px;top:407px;font:normal 12px/16px 'Liberation Sans','Noto Sans CJK SC',sans-serif;color:#ffff00;">六脉神剑</div>
<div class="t" style="left:154px;top:407px;font:normal 12px/16px 'Liberation Sans','Noto Sans CJK SC',sans-serif;color:#ffff00;"><span style="font-size:11.2px">NOTEXTA</span> <span style="font-size:12.7px">6.80</span></div>
<div class="t" style="left:246px;top:407px;font:normal 12px/16px 'Liberation Sans','Noto Sans CJK SC',sans-serif;color:#ff0000;"><span style="font-size:11.2px">MACD</span>金叉 <span style="font-size:12.7px">1.50</span></div>
<div class="t" style="left:339px;top:407px;font:normal 12px/16px 'Liberation Sans','Noto Sans CJK SC',sans-serif;color:#ff0000;"><span style="font-size:11.2px">KDJ</span>金叉 <span style="font-size:12.7px">2.50</span></div>
<div class="t" style="left:420px;top:407px;font:normal 12px/16px 'Liberation Sans','Noto Sans CJK SC',sans-serif;color:#ff0000;"><span style="font-size:11.2px">RSI</span>金叉 <span style="font-size:12.7px">3.50</span></div>
<div class="t" style="left:499px;top:407px;font:normal 12px/16px 'Liberation Sans','Noto Sans CJK SC',sans-serif;color:#ff0000;"><span style="font-size:11.2px">LWR</span>金叉 <span style="font-size:12.7px">4.50</span></div>
<div class="t" style="left:585px;top:407px;font:normal 12px/16px 'Liberation Sans','Noto Sans CJK SC',sans-serif;color:#ff0000;"><span style="font-size:11.2px">BBI</span>金叉 <span style="font-size:12.7px">5.50</span></div>
<div class="t" style="left:664px;top:407px;font:normal 12px/16px 'Liberation Sans','Noto Sans CJK SC',sans-serif;color:#ff0000;"><span style="font-size:11.2px">MTM</span>金叉 <span style="font-size:12.7px">6.50</span></div>
<div class="t" style="left:751px;top:407px;font:normal 12px/16px 'Liberation Sans','Noto Sans CJK SC',sans-serif;color:#ffff00;">涨买入 <span style="font-size:12.7px">0.50</span></div>
<div class="t" style="left:823px;top:407px;font:normal 12px/16px 'Liberation Sans','Noto Sans CJK SC',sans-serif;color:#ffff00;">上涨 <span style="font-size:12.7px">6.50</span></div>
<div class="t" style="left:885px;top:407px;font:normal 12px/16px 'Liberation Sans','Noto Sans CJK SC',sans-serif;color:#f0f0f0;">夏天 <span style="font-size:12.7px">2.00</span></div>
<div class="t" style="left:946px;top:407px;font:normal 12px/16px 'Liberation Sans','Noto Sans CJK SC',sans-serif;color:#f0f0f0;">秋天 <span style="font-size:12.7px">0.00</span></div>
<div class="t" style="left:1007px;top:407px;font:normal 12px/16px 'Liberation Sans','Noto Sans CJK SC',sans-serif;color:#f0f0f0;">冬天 <span style="font-size:12.7px">0.00</span></div>
<div class="t" style="right:1287px;top:171px;font:bold 12.5px/16.5px 'Liberation Sans','Noto Sans CJK SC',sans-serif;color:#8a96a6;">11.00</div>
<div class="t" style="right:1287px;top:268px;font:bold 12.5px/16.5px 'Liberation Sans','Noto Sans CJK SC',sans-serif;color:#8a96a6;">10.00</div>
<div class="t" style="right:1287px;top:445px;font:bold 12.5px/16.5px 'Liberation Sans','Noto Sans CJK SC',sans-serif;color:#8a96a6;">6.00</div>
<div class="t" style="right:1287px;top:517px;font:bold 12.5px/16.5px 'Liberation Sans','Noto Sans CJK SC',sans-serif;color:#8a96a6;">4.00</div>
<div class="t" style="right:1287px;top:589px;font:bold 12.5px/16.5px 'Liberation Sans','Noto Sans CJK SC',sans-serif;color:#8a96a6;">2.00</div>
<div class="t" style="left:114px;top:656px;font:normal 13px/17px 'Liberation Sans','Noto Sans CJK SC',sans-serif;color:#909090;">2023/07/03</div>
<div class="t" style="left:576px;top:656px;font:normal 13px/17px 'Liberation Sans','Noto Sans CJK SC',sans-serif;color:#909090;">2023/08/01</div>
<div class="t" style="left:1016px;top:656px;font:normal 13px/17px 'Liberation Sans','Noto Sans CJK SC',sans-serif;color:#909090;">2023/08/29</div>
<div class="t" style="left:255px;top:317px;font:normal 13px/17px 'Liberation Sans','Noto Sans CJK SC',sans-serif;color:#f04848;">9.41</div>
<div class="t" style="left:780px;top:128px;font:normal 13px/17px 'Liberation Sans','Noto Sans CJK SC',sans-serif;color:#f04848;">11.34</div>
<div class="t" style="left:1043px;top:94px;font:normal 13px/17px 'Liberation Sans','Noto Sans CJK SC',sans-serif;color:#f04848;">11.70</div>
<div class="t" style="left:365px;top:372px;font:normal 13px/17px 'Liberation Sans','Noto Sans CJK SC',sans-serif;color:#00d8e8;">9.00</div>
<div class="t" style="left:101px;top:390px;font:normal 13px/17px 'Liberation Sans','Noto Sans CJK SC',sans-serif;color:#00d8e8;">8.82</div>
<div class="t" style="left:981px;top:304px;font:normal 13px/17px 'Liberation Sans','Noto Sans CJK SC',sans-serif;color:#00e8f0;">9.70</div>
<div class="t" style="left:1053px;top:305px;font:normal 13px/17px 'Liberation Sans','Noto Sans CJK SC',sans-serif;color:#00e8f0;">10</div>
<div class="t" style="left:81.5px;top:389px;font:normal 12px/16px 'Liberation Sans','Noto Sans CJK SC',sans-serif;color:#e8e000;"><span style="font-size:12.3px;letter-spacing:-0.3px">45</span>天</div>
<div class="t" style="left:451px;top:338px;font:bold 14.3px/18px 'Liberation Serif','Noto Serif CJK SC',serif;color:#ffff00;">做多</div>
<div class="t" style="left:1045px;top:438.0px;font:normal 12px/16px 'Liberation Sans','Noto Sans CJK SC',sans-serif;color:#fff;">. MTM</div>
<div class="t" style="left:1045px;top:474.0px;font:normal 12px/16px 'Liberation Sans','Noto Sans CJK SC',sans-serif;color:#fff;">. BBI</div>
<div class="t" style="left:1045px;top:510.0px;font:normal 12px/16px 'Liberation Sans','Noto Sans CJK SC',sans-serif;color:#fff;">LWR</div>
<div class="t" style="left:1045px;top:546.0px;font:normal 12px/16px 'Liberation Sans','Noto Sans CJK SC',sans-serif;color:#fff;">. RSI</div>
<div class="t" style="left:1045px;top:582.0px;font:normal 12px/16px 'Liberation Sans','Noto Sans CJK SC',sans-serif;color:#fff;">. KDJ</div>
<div class="t" style="left:1045px;top:618.0px;font:normal 12px/16px 'Liberation Sans','Noto Sans CJK SC',sans-serif;color:#fff;">.MACD</div>
<div class="t" style="left:35px;top:679px;font:normal 12px/16px 'Liberation Sans','Noto Sans CJK SC',sans-serif;color:#e0e0e0;">全球股票指数</div>
<div class="t" style="left:118px;top:679px;font:normal 12px/16px 'Liberation Sans','Noto Sans CJK SC',sans-serif;color:#ff7a1a;">国内股票</div>
<div class="t" style="left:178px;top:679px;font:normal 12px/16px 'Liberation Sans','Noto Sans CJK SC',sans-serif;color:#e0e0e0;">香港股票</div>
<div class="t" style="left:238px;top:679px;font:normal 12px/16px 'Liberation Sans','Noto Sans CJK SC',sans-serif;color:#e0e0e0;">美国股票</div>
<div class="abs" style="left:113px;top:698.6px;width:60px;height:1.4px;background:#ff7a1a"></div>
<div class="t" style="left:1302px;top:678px;font:normal 13px/17px 'Liberation Sans','Noto Sans CJK SC',sans-serif;color:#ff7a1a;">在线客服</div>
<div class="t" style="left:32px;top:707px;font:bold 11.6px/15.6px 'Liberation Sans','Noto Sans CJK SC',sans-serif;color:#ff3232;">上证指数<span style="font:bold 13px/16px 'Liberation Mono','Noto Sans CJK SC',monospace;letter-spacing:-1.05px">&nbsp;3135.89&nbsp;+37.25</span></div>
<div class="t" style="left:205px;top:707px;font:bold 11.6px/15.6px 'Liberation Sans','Noto Sans CJK SC',sans-serif;color:#ff3232;">文华商品<span style="font:bold 13px/16px 'Liberation Mono','Noto Sans CJK SC',monospace;letter-spacing:-1.05px">&nbsp;187.03&nbsp;+0.64</span></div>
<div class="t" style="left:753px;top:705px;font:normal 12px/16px 'Liberation Sans','Noto Sans CJK SC',sans-serif;color:#ff7a1a;">如何充值模拟豆做模拟交易</div>
<div class="t" style="left:1098px;top:704px;width:49px;height:14px;border:1px solid #5a5d62;background:#2f3237;color:#f0f0f0;font:12.5px/18px 'Liberation Sans','Noto Sans CJK SC',sans-serif;text-align:center">期货户</div>
<div class="t" style="left:1152px;top:704px;width:49px;height:14px;border:1px solid #5a5d62;background:#2f3237;color:#f0f0f0;font:12.5px/18px 'Liberation Sans','Noto Sans CJK SC',sans-serif;text-align:center">外盘户</div>
<div class="t" style="left:1275px;top:707px;font:normal 13.5px/17.5px 'Liberation Sans','Noto Sans CJK SC',sans-serif;color:#d0d0d0;">23:00:16 - wh</div>
<svg width="1366" height="716" viewBox="0 0 1366 716"><g shape-rendering="crispEdges" fill="none" stroke="#cc1a10" stroke-width="1">
<path d="M1122.5,90.5 H1363.5 V654.5"/>
<path d="M1122.5,197.5 H1363.5 M1122.5,302.5 H1363.5 M1122.5,501.5 H1363.5 M1122.5,569.5 H1363.5"/>
<path d="M1249.5,303 V501" stroke-dasharray="3 2"/>
<path d="M1122.5,654.5 H1131.5 L1139.5,669.5 H1177.5 L1183.5,654.5 H1363.5 M1180.3,662 L1185,669.5 H1223.5 L1226.5,662 M1224.5,654.5 L1231,669.5 H1270 L1272,662.4 M1270.2,654.5 L1277,669.5 H1316 L1321.5,654.5" shape-rendering="auto" stroke-width="1.1"/>
</g></svg>
<div class="t" style="left:1129px;top:62px;font:normal 23.5px/28px 'Liberation Serif','Noto Serif CJK SC',serif;color:#d8d800;">深物业</div>
<div class="t" style="left:1200.5px;top:62px;font:normal 23.5px/28px 'Liberation Serif','Noto Serif CJK SC',serif;color:#d8d800;transform:scaleX(0.68);transform-origin:0 0">A</div>
<div class="t" style="left:1224px;top:62px;font:normal 23.3px/28px 'Liberation Serif','Noto Serif CJK SC',serif;color:#d8d800;">000011</div>
<div class="t" style="left:1124.5px;top:94px;font:normal 14px/18px 'Liberation Serif','Noto Serif CJK SC',serif;color:#fff;">卖五</div>
<div class="t" style="right:127px;top:94px;font:normal 14px/18px 'Liberation Sans','Noto Sans CJK SC',sans-serif;color:#e0e8f0;letter-spacing:0.4px">----</div>
<div class="t" style="right:9px;top:94px;font:normal 14px/18px 'Liberation Sans','Noto Sans CJK SC',sans-serif;color:#d8d800;letter-spacing:0.4px">----</div>
<div class="t" style="left:1124.5px;top:115px;font:normal 14px/18px 'Liberation Serif','Noto Serif CJK SC',serif;color:#fff;">卖四</div>
<div class="t" style="right:127px;top:115px;font:normal 14px/18px 'Liberation Sans','Noto Sans CJK SC',sans-serif;color:#e0e8f0;letter-spacing:0.4px">----</div>
<div class="t" style="right:9px;top:115px;font:normal 14px/18px 'Liberation Sans','Noto Sans CJK SC',sans-serif;color:#d8d800;letter-spacing:0.4px">----</div>
<div class="t" style="left:1124.5px;top:136px;font:normal 14px/18px 'Liberation Serif','Noto Serif CJK SC',serif;color:#fff;">卖三</div>
<div class="t" style="right:127px;top:136px;font:normal 14px/18px 'Liberation Sans','Noto Sans CJK SC',sans-serif;color:#e0e8f0;letter-spacing:0.4px">----</div>
<div class="t" style="right:9px;top:136px;font:normal 14px/18px 'Liberation Sans','Noto Sans CJK SC',sans-serif;color:#d8d800;letter-spacing:0.4px">----</div>
<div class="t" style="left:1124.5px;top:157px;font:normal 14px/18px 'Liberation Serif','Noto Serif CJK SC',serif;color:#fff;">卖二</div>
<div class="t" style="right:127px;top:157px;font:normal 14px/18px 'Liberation Sans','Noto Sans CJK SC',sans-serif;color:#e0e8f0;letter-spacing:0.4px">----</div>
<div class="t" style="right:9px;top:157px;font:normal 14px/18px 'Liberation Sans','Noto Sans CJK SC',sans-serif;color:#d8d800;letter-spacing:0.4px">----</div>
<div class="t" style="left:1124.5px;top:178px;font:normal 14px/18px 'Liberation Serif','Noto Serif CJK SC',serif;color:#fff;">卖一</div>
<div class="t" style="right:127px;top:178px;font:normal 14px/18px 'Liberation Sans','Noto Sans CJK SC',sans-serif;color:#e0e8f0;letter-spacing:0.4px">----</div>
<div class="t" style="right:9px;top:178px;font:normal 14px/18px 'Liberation Sans','Noto Sans CJK SC',sans-serif;color:#d8d800;letter-spacing:0.4px">----</div>
<div class="t" style="left:1124.5px;top:199px;font:normal 14px/18px 'Liberation Serif','Noto Serif CJK SC',serif;color:#fff;">买一</div>
<div class="t" style="right:126.5px;top:199px;font:normal 15.7px/18px 'Liberation Sans','Noto Sans CJK SC',sans-serif;color:#ff3838;">11.70</div>
<div class="t" style="right:8.5px;top:199px;font:normal 15.7px/18px 'Liberation Sans','Noto Sans CJK SC',sans-serif;color:#d8d820;">27998</div>
<div class="t" style="left:1124.5px;top:220px;font:normal 14px/18px 'Liberation Serif','Noto Serif CJK SC',serif;color:#fff;">买二</div>
<div class="t" style="right:126.5px;top:220px;font:normal 15.7px/18px 'Liberation Sans','Noto Sans CJK SC',sans-serif;color:#ff3838;">11.69</div>
<div class="t" style="right:8.5px;top:220px;font:normal 15.7px/18px 'Liberation Sans','Noto Sans CJK SC',sans-serif;color:#d8d820;">49</div>
<div class="t" style="left:1124.5px;top:241px;font:normal 14px/18px 'Liberation Serif','Noto Serif CJK SC',serif;color:#fff;">买三</div>
<div class="t" style="right:126.5px;top:241px;font:normal 15.7px/18px 'Liberation Sans','Noto Sans CJK SC',sans-serif;color:#ff3838;">11.68</div>
<div class="t" style="right:8.5px;top:241px;font:normal 15.7px/18px 'Liberation Sans','Noto Sans CJK SC',sans-serif;color:#d8d820;">144</div>
<div class="t" style="left:1124.5px;top:262px;font:normal 14px/18px 'Liberation Serif','Noto Serif CJK SC',serif;color:#fff;">买四</div>
<div class="t" style="right:126.5px;top:262px;font:normal 15.7px/18px 'Liberation Sans','Noto Sans CJK SC',sans-serif;color:#ff3838;">11.67</div>
<div class="t" style="right:8.5px;top:262px;font:normal 15.7px/18px 'Liberation Sans','Noto Sans CJK SC',sans-serif;color:#d8d820;">20</div>
<div class="t" style="left:1124.5px;top:283px;font:normal 14px/18px 'Liberation Serif','Noto Serif CJK SC',serif;color:#fff;">买五</div>
<div class="t" style="right:126.5px;top:283px;font:normal 15.7px/18px 'Liberation Sans','Noto Sans CJK SC',sans-serif;color:#ff3838;">11.66</div>
<div class="t" style="right:8.5px;top:283px;font:normal 15.7px/18px 'Liberation Sans','Noto Sans CJK SC',sans-serif;color:#d8d820;">68</div>
<div class="t" style="left:1125px;top:306px;font:normal 14px/18px 'Liberation Serif','Noto Serif CJK SC',serif;color:#fff;">最新</div>
<div class="t" style="right:127px;top:306px;font:bold 14px/18px 'Liberation Sans','Noto Sans CJK SC',sans-serif;color:#ff3838;letter-spacing:-0.5px">11.70</div>
<div class="t" style="left:1256px;top:306px;font:normal 14px/18px 'Liberation Serif','Noto Serif CJK SC',serif;color:#fff;">开盘</div>
<div class="t" style="right:9px;top:306px;font:bold 14px/18px 'Liberation Sans','Noto Sans CJK SC',sans-serif;color:#00e000;letter-spacing:-0.5px">10.54</div>
<div class="t" style="left:1125px;top:328px;font:normal 14px/18px 'Liberation Serif','Noto Serif CJK SC',serif;color:#fff;">涨跌</div>
<div class="t" style="right:127px;top:328px;font:bold 14px/18px 'Liberation Sans','Noto Sans CJK SC',sans-serif;color:#ff3838;letter-spacing:-0.5px">1.06</div>
<div class="t" style="left:1256px;top:328px;font:normal 14px/18px 'Liberation Serif','Noto Serif CJK SC',serif;color:#fff;">最高</div>
<div class="t" style="right:9px;top:328px;font:bold 14px/18px 'Liberation Sans','Noto Sans CJK SC',sans-serif;color:#ff3838;letter-spacing:-0.5px">11.70</div>
<div class="t" style="left:1125px;top:350px;font:normal 14px/18px 'Liberation Serif','Noto Serif CJK SC',serif;color:#fff;">涨幅</div>
<div class="t" style="right:127px;top:350px;font:bold 14px/18px 'Liberation Sans','Noto Sans CJK SC',sans-serif;color:#ff3838;letter-spacing:-0.5px">9.96%</div>
<div class="t" style="left:1256px;top:350px;font:normal 14px/18px 'Liberation Serif','Noto Serif CJK SC',serif;color:#fff;">最低</div>
<div class="t" style="right:9px;top:350px;font:bold 14px/18px 'Liberation Sans','Noto Sans CJK SC',sans-serif;color:#00e000;letter-spacing:-0.5px">10.53</div>
<div class="t" style="left:1125px;top:372px;font:normal 14px/18px 'Liberation Serif','Noto Serif CJK SC',serif;color:#fff;">振幅</div>
<div class="t" style="right:127px;top:372px;font:bold 14px/18px 'Liberation Sans','Noto Sans CJK SC',sans-serif;color:#e0e020;letter-spacing:-0.5px">11.00%</div>
<div class="t" style="left:1256px;top:372px;font:normal 14px/18px 'Liberation Serif','Noto Serif CJK SC',serif;color:#fff;">均价</div>
<div class="t" style="right:9px;top:372px;font:bold 14px/18px 'Liberation Sans','Noto Sans CJK SC',sans-serif;color:#ff3838;letter-spacing:-0.5px">11.23</div>
<div class="t" style="left:1125px;top:394px;font:normal 14px/18px 'Liberation Serif','Noto Serif CJK SC',serif;color:#fff;">委比</div>
<div class="t" style="right:127px;top:394px;font:bold 14px/18px 'Liberation Sans','Noto Sans CJK SC',sans-serif;color:#e0e020;letter-spacing:-0.5px">100.00%</div>
<div class="t" style="left:1256px;top:394px;font:normal 14px/18px 'Liberation Serif','Noto Serif CJK SC',serif;color:#fff;">量比</div>
<div class="t" style="right:9px;top:394px;font:bold 14px/18px 'Liberation Sans','Noto Sans CJK SC',sans-serif;color:#e0e020;letter-spacing:-0.5px">3.63</div>
<div class="t" style="left:1125px;top:416px;font:normal 14px/18px 'Liberation Serif','Noto Serif CJK SC',serif;color:#fff;">总量</div>
<div class="t" style="right:127px;top:416px;font:bold 14px/18px 'Liberation Sans','Noto Sans CJK SC',sans-serif;color:#e0e020;letter-spacing:-0.5px">36万</div>
<div class="t" style="left:1256px;top:416px;font:normal 14px/18px 'Liberation Serif','Noto Serif CJK SC',serif;color:#fff;">换手率</div>
<div class="t" style="right:9px;top:416px;font:bold 14px/18px 'Liberation Sans','Noto Sans CJK SC',sans-serif;color:#e0e020;letter-spacing:-0.5px">6.79%</div>
<div class="t" style="left:1125px;top:438px;font:normal 14px/18px 'Liberation Serif','Noto Serif CJK SC',serif;color:#fff;">金额</div>
<div class="t" style="right:127px;top:438px;font:bold 14px/18px 'Liberation Sans','Noto Sans CJK SC',sans-serif;color:#ff3838;letter-spacing:-0.5px">4.0亿</div>
<div class="t" style="left:1256px;top:438px;font:normal 14px/18px 'Liberation Serif','Noto Serif CJK SC',serif;color:#fff;">市盈率</div>
<div class="t" style="right:9px;top:438px;font:bold 14px/18px 'Liberation Sans','Noto Sans CJK SC',sans-serif;color:#e0e020;letter-spacing:-0.5px">13.17</div>
<div class="t" style="left:1125px;top:460px;font:normal 14px/18px 'Liberation Serif','Noto Serif CJK SC',serif;color:#fff;">外盘</div>
<div class="t" style="right:127px;top:460px;font:bold 14px/18px 'Liberation Sans','Noto Sans CJK SC',sans-serif;color:#ff3838;letter-spacing:-0.5px">19万</div>
<div class="t" style="left:1256px;top:460px;font:normal 14px/18px 'Liberation Serif','Noto Serif CJK SC',serif;color:#fff;">涨停</div>
<div class="t" style="right:9px;top:460px;font:bold 14px/18px 'Liberation Sans','Noto Sans CJK SC',sans-serif;color:#ff3838;letter-spacing:-0.5px">11.70</div>
<div class="t" style="left:1125px;top:482px;font:normal 14px/18px 'Liberation Serif','Noto Serif CJK SC',serif;color:#fff;">内盘</div>
<div class="t" style="right:127px;top:482px;font:bold 14px/18px 'Liberation Sans','Noto Sans CJK SC',sans-serif;color:#00e000;letter-spacing:-0.5px">17万</div>
<div class="t" style="left:1256px;top:482px;font:normal 14px/18px 'Liberation Serif','Noto Serif CJK SC',serif;color:#fff;">跌停</div>
<div class="t" style="right:9px;top:482px;font:bold 14px/18px 'Liberation Sans','Noto Sans CJK SC',sans-serif;color:#00e000;letter-spacing:-0.5px">9.58</div>
<div class="t" style="left:1128px;top:506px;font:normal 14px/18px 'Liberation Serif','Noto Serif CJK SC',serif;color:#909090;">时间</div>
<div class="t" style="left:1225px;top:506px;font:normal 14px/18px 'Liberation Serif','Noto Serif CJK SC',serif;color:#909090;">价位</div>
<div class="t" style="left:1320px;top:506px;font:normal 14px/18px 'Liberation Serif','Noto Serif CJK SC',serif;color:#909090;">大单</div>
<div class="t" style="left:1128px;top:573px;font:normal 14px/18px 'Liberation Serif','Noto Serif CJK SC',serif;color:#909090;">时间</div>
<div class="t" style="left:1225px;top:573px;font:normal 14px/18px 'Liberation Serif','Noto Serif CJK SC',serif;color:#909090;">价位</div>
<div class="t" style="left:1320px;top:573px;font:normal 14px/18px 'Liberation Serif','Noto Serif CJK SC',serif;color:#909090;">现手</div>
<div class="t" style="left:1128px;top:594px;font:bold 14px/18px 'Liberation Sans','Noto Sans CJK SC',sans-serif;color:#8a96a6;letter-spacing:-0.7px">14:57</div>
<div class="t" style="left:1128px;top:618px;font:bold 14px/18px 'Liberation Sans','Noto Sans CJK SC',sans-serif;color:#8a96a6;letter-spacing:-0.7px">14:59</div>
<div class="t" style="left:1122px;top:618px;font:bold 12px/18px 'Liberation Sans','Noto Sans CJK SC',sans-serif;color:#ffff00;">&gt;</div>
<div class="t" style="left:1221px;top:594px;font:bold 14px/18px 'Liberation Sans','Noto Sans CJK SC',sans-serif;color:#ff3838;letter-spacing:-0.5px">11.70</div>
<div class="t" style="left:1221px;top:618px;font:bold 14px/18px 'Liberation Sans','Noto Sans CJK SC',sans-serif;color:#ff3838;letter-spacing:-0.5px">11.70</div>
<div class="t" style="right:19px;top:594px;font:bold 14px/18px 'Liberation Sans','Noto Sans CJK SC',sans-serif;color:#00e000;letter-spacing:-0.5px">10</div>
<div class="t" style="right:19px;top:618px;font:bold 14px/18px 'Liberation Sans','Noto Sans CJK SC',sans-serif;color:#ff3838;letter-spacing:-0.5px">1777</div>
<div class="t" style="left:1146px;top:655px;font:normal 12px/16px 'Liberation Sans','Noto Sans CJK SC',sans-serif;color:#a0a0a0;">明细</div>
<div class="t" style="left:1192px;top:655px;font:normal 12px/16px 'Liberation Sans','Noto Sans CJK SC',sans-serif;color:#a0a0a0;">分价</div>
<div class="t" style="left:1237px;top:655px;font:normal 12px/16px 'Liberation Sans','Noto Sans CJK SC',sans-serif;color:#a0a0a0;">财务</div>
<div class="t" style="left:1284px;top:655px;font:normal 12px/16px 'Liberation Sans','Noto Sans CJK SC',sans-serif;color:#a0a0a0;">筹码</div>
<svg width="1366" height="716" viewBox="0 0 1366 716">
<g fill="none" stroke="#d4d4d4" stroke-width="1.3" stroke-linecap="butt" stroke-linejoin="miter">
<path d="M16.5,41 H29.5 M23.5,34 L16.5,41 L23.5,48"/>
<rect x="44.5" y="33.5" width="14" height="15"/><path d="M46.5,38.5 h4.5 m1.5,0 h4.5 M46.5,41.5 h4.5 m1.5,0 h4.5 M46.5,44.5 h4.5 m1.5,0 h4.5"/>
<path d="M73.7,43.6 L80,38 L82.5,40.5 L89,35 M73,46.5 H90"/>
<rect x="104.5" y="36.5" width="6" height="9"/><path d="M107.5,33 V36.5 M107.5,45.5 V49.5"/>
<rect x="114.5" y="37.5" width="5" height="5"/><path d="M117,35.5 V37.5 M117,42.5 V46.5"/>
<path d="M137,34.3 H143 L139.8,38.6 H141.5 L135,48.6 L137.6,42 H132.8 Z" stroke-width="1.1"/>
<rect x="163.5" y="33.5" width="16" height="15"/><path d="M163.5,41.5 h3 M176.5,41.5 h3"/>
<path d="M193.5,33.5 H206.5 L209.5,36.5 V48.5 H193.5 Z M197.5,33.5 V39.5 H205.5 V33.5 M203.5,35.5 V37.5"/>
<path d="M226.2,35.4 A7.6,7.6 0 1 0 231,33.8" /><path d="M225.2,33.8 V36.8 H228.2" stroke-width="1.1"/>
<path d="M253.3,42.5 L258.8,37 L263.2,41.4 L268.1,35.7 M253,46.5 H261"/>
<path d="M264,45 A2.8,2.8 0 0 1 269.2,44 M269.6,46 A2.8,2.8 0 0 1 264.4,47" stroke-width="1.1"/><path d="M269.6,42.6 V44.4 H267.8 M264,48.4 V46.6 H265.8" stroke-width="1"/>
<path d="M554.3,42.6 L560.2,37.6 V47.9 Z M568.6,42.6 L562.6,37.6 V47.9 Z"/>
<path d="M583.9,37.1 L591,42.6 L583.9,48.1 Z M598.9,37.1 L591.8,42.6 L598.9,48.1 Z"/>
<path d="M615.5,42.5 L622,36.5 V39.5 H628 V45.5 H622 V48.5 Z"/>
<path d="M658.5,42.5 L652,36.5 V39.5 H646 V45.5 H652 V48.5 Z"/>
<path d="M675,43 L682,37.3 L689,43 M675,48.5 L682,42.8 L689,48.5"/>
<path d="M705,37 L712,42.7 L719,37 M705,42.5 L712,48.2 L719,42.5"/>
<rect x="734.5" y="35.5" width="14" height="14"/><path d="M742.5,35.5 V49.5 M734.5,43.5 H742.5 M744.5,39.5 h2.5 M744.5,42.5 h2.5 M744.5,45.5 h2.5"/>
<path d="M1265,11.5 H1275.5" stroke-width="1"/>
<path d="M1304.5,9.5 h7 v7 h-7 Z M1306.5,9.5 V7.5 h7 v7 h-2" stroke-width="1"/>
<path d="M1343,7 L1353,17 M1353,7 L1343,17" stroke-width="1.2"/>
</g>
<g fill="#d4d4d4"><rect x="764" y="43" width="2" height="2"/><rect x="771" y="43" width="2" height="2"/><rect x="777.5" y="43" width="2" height="2"/></g>
<g fill="none" stroke="#e8e8e8" stroke-width="1.1"><path d="M41,66.5 H36.5 Q35.5,66.5 35.5,67.5 V70.5 Q35.5,71.5 36.5,71.5 H40 M45,66.5 H49.5 Q50.5,66.5 50.5,67.5 V70.5 Q50.5,71.5 49.5,71.5 H46 M40.5,64.5 L46,73.5"/></g>
<path d="M213.5,65.5 L218.5,70.5 L223.5,65.5" fill="none" stroke="#fff" stroke-width="1.5"/>
<path d="M136.5,84.5 L141.5,89.5 L146.5,84.5" fill="none" stroke="#ffff00" stroke-width="1.5"/>
<path d="M136.5,412.5 L141.5,417.5 L146.5,412.5" fill="none" stroke="#ffff00" stroke-width="1.5"/>
<g fill="none" stroke="#ff7a1a" stroke-width="1.6" stroke-linecap="round"><path d="M1281.8,693.5 V686.5 A5.7,6.6 0 0 1 1293.2,686.5 V693.5"/><path d="M1281.8,685.6 Q1277.6,686 1277.6,689.8 Q1277.6,693.6 1281.8,694"/><path d="M1293.2,685.6 Q1297.4,686 1297.4,689.8 Q1297.4,693.6 1293.2,694"/></g>
<path d="M1216.5,708 Q1213.5,711.5 1213,716" stroke="#e02020" stroke-width="1.2" fill="none"/>
<rect x="1228" y="706" width="16" height="10" fill="#0a5a16"/>
<g stroke="#20e040" stroke-width="1" stroke-dasharray="1 1" shape-rendering="crispEdges"><path d="M1229,707.5 H1243 M1229,709.5 H1243 M1229,711.5 H1243 M1229,713.5 H1243 M1229,715.5 H1243"/></g>
<path d="M1243.5,706 V716" stroke="#e0e0e0" stroke-width="1" shape-rendering="crispEdges"/>
<g fill="#18c038"><rect x="1255" y="713" width="3" height="3"/><rect x="1259" y="710" width="3" height="6"/><rect x="1263" y="706" width="3" height="10"/></g>
<g fill="#000" stroke="#7c7c7c" stroke-width="1">
<path d="M28.5,396 V570 Q28.5,584 20,592 L0,611.5" fill="none"/>
<path d="M28.5,316.5 H8 Q3.5,316.5 3.5,321.0 V382.0 L28.5,406.0"/>
<path d="M28.5,236.5 H8 Q3.5,236.5 3.5,241.0 V302.0 L28.5,326.0"/>
<path d="M28.5,76.5 H8 Q3.5,76.5 3.5,81.0 V142.0 L28.5,166.0"/>
<path d="M28.5,76.5 V156.5" fill="none"/>
<path d="M28.5,246 V410" fill="none"/>
<path d="M30,156.5 H8 Q3.5,156.5 3.5,161 V222 L28.5,246 H30 Z" stroke="none"/>
<path d="M28.5,156.5 H8 Q3.5,156.5 3.5,161 V222 L28.5,246" fill="none" stroke="#a0a0a0"/>
</g>
</svg>
<div class="t" style="left:8.5px;top:92px;font:normal 12px/16px 'Liberation Sans','Noto Sans CJK SC',sans-serif;color:#8c8c8c;width:16px;text-align:center">分</div>
<div class="t" style="left:8.5px;top:105.5px;font:normal 12px/16px 'Liberation Sans','Noto Sans CJK SC',sans-serif;color:#8c8c8c;width:16px;text-align:center">时</div>
<div class="t" style="left:8.5px;top:119px;font:normal 12px/16px 'Liberation Sans','Noto Sans CJK SC',sans-serif;color:#8c8c8c;width:16px;text-align:center">图</div>
<div class="t" style="left:8.5px;top:172px;font:bold 12.5px/16px 'Liberation Serif','Noto Serif CJK SC',serif;color:#fff;width:16px;text-align:center">K</div>
<div class="t" style="left:8.5px;top:186px;font:500 12px/16px 'Liberation Sans','Noto Sans CJK SC',sans-serif;color:#ffffff;width:16px;text-align:center">线</div>
<div class="t" style="left:8.5px;top:200px;font:500 12px/16px 'Liberation Sans','Noto Sans CJK SC',sans-serif;color:#ffffff;width:16px;text-align:center">图</div>
<div class="t" style="left:7px;top:253px;width:16px;writing-mode:vertical-rl;text-orientation:mixed;font:12px/16px 'Liberation Sans','Noto Sans CJK SC',sans-serif;color:#8c8c8c;letter-spacing:1.7px">资讯链</div>
<div class="t" style="left:7px;top:328.5px;width:16px;writing-mode:vertical-rl;text-orientation:mixed;font:12px/16px 'Liberation Sans','Noto Sans CJK SC',sans-serif;color:#8c8c8c;letter-spacing:0.5px">F10<span style="letter-spacing:1.4px;margin-top:3px;display:inline-block">资料</span></div>
<div class="t" style="left:140px;top:39px;font:normal 11.5px/13px 'Liberation Sans','Noto Sans CJK SC',sans-serif;color:#d4d4d4;transform:scaleX(.8);transform-origin:0 0">单</div>
<div class="t" style="left:165px;top:34.5px;font:normal 12.5px/15px 'Liberation Sans','Noto Sans CJK SC',sans-serif;color:#d4d4d4;">单</div>
</body></html>
